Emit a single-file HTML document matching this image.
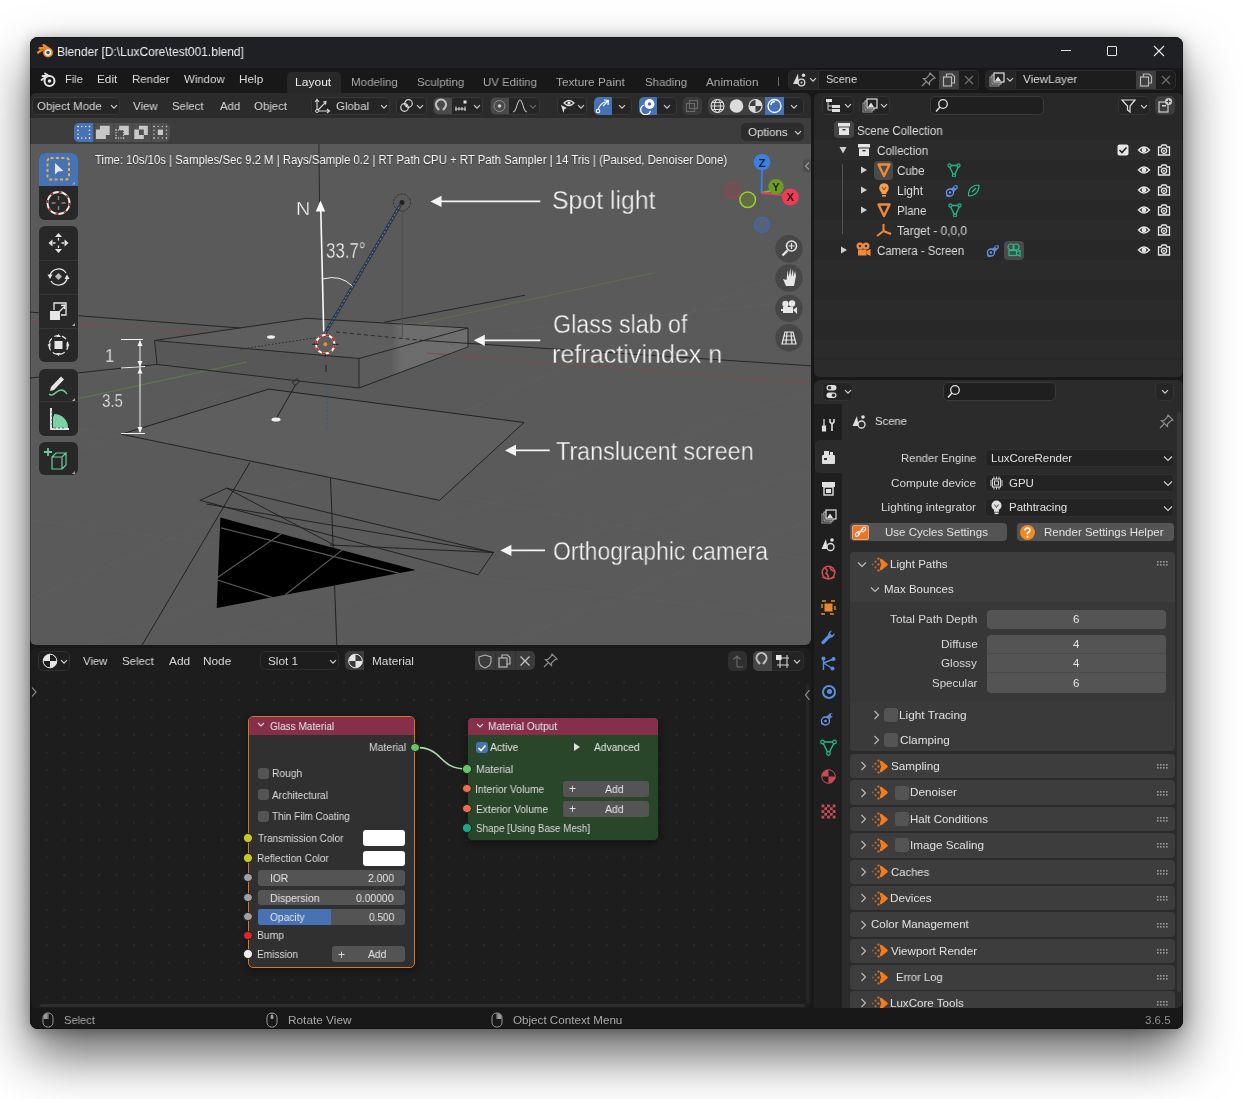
<!DOCTYPE html>
<html><head><meta charset="utf-8">
<style>
*{box-sizing:border-box;margin:0;padding:0}
html,body{width:1253px;height:1099px;overflow:hidden;background:#fff}
body{position:relative;font-family:"Liberation Sans",sans-serif;color:#d6d6d6;font-size:12px}
.a{position:absolute}
.t{position:absolute;white-space:nowrap;line-height:1;transform-origin:0 0;will-change:transform}
</style></head><body>
<div class="a" style="left:30px;top:37px;width:1153px;height:992px;background:#181818;border-radius:8px;box-shadow:0 26px 52px rgba(0,0,0,.62),0 2px 14px rgba(0,0,0,.28)"></div>
<div class="a" style="left:30px;top:37px;width:1153px;height:31px;background:#1f2023;border-radius:8px 8px 0 0"></div>
<svg class="a" style="left:36px;top:42px;" width="20" height="18" viewBox="0 0 20 18"><g transform="translate(1,1)"><path d="M1 9.5 L7 5.5 L2.5 5.2 L8 4.8 L6.5 2 L11 5 " fill="none" stroke="#f08a24" stroke-width="2.2" stroke-linecap="round" stroke-linejoin="round"/><circle cx="11" cy="9.5" r="5" fill="#f08a24"/><circle cx="11" cy="9.5" r="3.2" fill="#fff"/><circle cx="11" cy="9.5" r="1.8" fill="#265787"/></g></svg>
<div class="t" style="left:57.04px;top:45.79px;font-size:12.5px;color:#f2f2f2;transform:scaleX(0.9567);">Blender [D:\LuxCore\test001.blend]</div>
<div class="a" style="left:1061px;top:50px;width:10px;height:1px;background:#e0e0e0;"></div>
<div class="a" style="left:1107px;top:46px;width:10px;height:10px;background:transparent;border:1px solid #e0e0e0;border-radius:1px"></div>
<svg class="a" style="left:1153px;top:45px;" width="12" height="12" viewBox="0 0 12 12"><path d="M1 1 L11 11 M11 1 L1 11" stroke="#e8e8e8" stroke-width="1.1"/></svg>
<svg class="a" style="left:40px;top:72px;" width="16" height="15" viewBox="0 0 16 15"><path d="M1.5 8 L6 4.6 M2.5 4 L7.5 4 M5 1.5 L9 4" stroke="#e6e6e6" stroke-width="1.8" stroke-linecap="round" fill="none"/><circle cx="9.5" cy="9" r="5" fill="none" stroke="#e6e6e6" stroke-width="2"/><circle cx="9.5" cy="9" r="1.8" fill="#e6e6e6"/></svg>
<div class="t" style="left:65.11px;top:74.44px;font-size:11.8px;color:#dcdcdc;transform:scaleX(0.9385);">File</div>
<div class="t" style="left:97.07px;top:74.44px;font-size:11.8px;color:#dcdcdc;transform:scaleX(0.9818);">Edit</div>
<div class="t" style="left:131.58px;top:74.44px;font-size:11.8px;color:#dcdcdc;transform:scaleX(0.9697);">Render</div>
<div class="t" style="left:184.00px;top:74.44px;font-size:11.8px;color:#dcdcdc;transform:scaleX(0.9668);">Window</div>
<div class="t" style="left:239.05px;top:74.44px;font-size:11.8px;color:#dcdcdc;">Help</div>
<div class="a" style="left:287px;top:72px;width:54px;height:21px;background:#282828;border-radius:5px 5px 0 0"></div>
<div class="t" style="left:295.24px;top:76.64px;font-size:11.8px;color:#ececec;transform:scaleX(1.0222);">Layout</div>
<div class="t" style="left:350.88px;top:76.64px;font-size:11.8px;color:#a9a9a9;transform:scaleX(0.9797);">Modeling</div>
<div class="t" style="left:416.73px;top:76.64px;font-size:11.8px;color:#a9a9a9;transform:scaleX(0.9725);">Sculpting</div>
<div class="t" style="left:482.79px;top:76.64px;font-size:11.8px;color:#a9a9a9;transform:scaleX(0.9677);">UV Editing</div>
<div class="t" style="left:555.96px;top:76.64px;font-size:11.8px;color:#a9a9a9;">Texture Paint</div>
<div class="t" style="left:644.63px;top:76.64px;font-size:11.8px;color:#a9a9a9;transform:scaleX(0.9716);">Shading</div>
<div class="t" style="left:706.00px;top:76.64px;font-size:11.8px;color:#a9a9a9;">Animation</div>
<div class="a" style="left:778px;top:77px;width:1px;height:9px;background:#6a6a6a;"></div>
<div class="a" style="left:787.5px;top:70px;width:191px;height:19.5px;background:#1d1d1d;border:1px solid #2c2c2c;border-radius:5px"></div>
<div class="a" style="left:788.5px;top:71px;width:30px;height:17.5px;background:#262626;border-radius:4px 0 0 4px;border-right:1px solid #2e2e2e"></div>
<svg class="a" style="left:791px;top:71px;" width="18" height="17" viewBox="0 0 18 17"><path d="M7 2.5 L2 13 L8 13 Z" fill="#d8d8d8"/><circle cx="12.5" cy="4.2" r="1.8" fill="#d8d8d8"/><circle cx="10.5" cy="11.5" r="3.3" fill="#262626" stroke="#d8d8d8" stroke-width="1.3"/><circle cx="10.5" cy="11.5" r="1" fill="#d8d8d8"/></svg>
<svg class="a" style="left:807.5px;top:76px;" width="10" height="8" viewBox="0 0 10 8"><path d="M2 2.2 L5 5.2 L8 2.2" fill="none" stroke="#cfcfcf" stroke-width="1.2"/></svg>
<div class="t" style="left:826.45px;top:74.14px;font-size:11.8px;color:#dcdcdc;transform:scaleX(0.9279);">Scene</div>
<svg class="a" style="left:920px;top:71px;" width="17" height="17" viewBox="0 0 17 17"><path d="M10 2 L15 7 L12.5 8 L9.5 11 L9.5 13.5 L3.5 7.5 L6 7.5 L9 4.5 Z M6 11 L2 15" fill="none" stroke="#8a8a8a" stroke-width="1.2"/></svg>
<div class="a" style="left:939px;top:70.5px;width:20px;height:18.5px;background:#3f3f3f;"></div>
<svg class="a" style="left:941px;top:72px;" width="16" height="16" viewBox="0 0 16 16"><rect x="2.5" y="5" width="8" height="9" fill="none" stroke="#b8b8b8" stroke-width="1.2"/><path d="M5.5 5 L5.5 2 L11 2 L13.5 4.5 L13.5 11 L10.5 11" fill="none" stroke="#b8b8b8" stroke-width="1.2"/></svg>
<svg class="a" style="left:962px;top:73px;" width="14" height="14" viewBox="0 0 14 14"><path d="M3 3 L11 11 M11 3 L3 11" stroke="#6f6f6f" stroke-width="1.2"/></svg>
<div class="a" style="left:984.5px;top:70px;width:191px;height:19.5px;background:#1d1d1d;border:1px solid #2c2c2c;border-radius:5px"></div>
<div class="a" style="left:985.5px;top:71px;width:30px;height:17.5px;background:#262626;border-radius:4px 0 0 4px;border-right:1px solid #2e2e2e"></div>
<svg class="a" style="left:988px;top:71px;" width="18" height="17" viewBox="0 0 18 17"><rect x="2" y="6" width="9" height="9" fill="none" stroke="#9a9a9a" stroke-width="1"/><rect x="4" y="4" width="9" height="9" fill="#262626" stroke="#bdbdbd" stroke-width="1"/><rect x="6" y="2" width="10" height="9" fill="#262626" stroke="#e0e0e0" stroke-width="1.2"/><path d="M7 10 L10 5.5 L13 10 Z" fill="#e0e0e0"/></svg>
<svg class="a" style="left:1004.5px;top:76px;" width="10" height="8" viewBox="0 0 10 8"><path d="M2 2.2 L5 5.2 L8 2.2" fill="none" stroke="#cfcfcf" stroke-width="1.2"/></svg>
<div class="t" style="left:1022.88px;top:74.14px;font-size:11.8px;color:#dcdcdc;transform:scaleX(0.9884);">ViewLayer</div>
<div class="a" style="left:1135.5px;top:70.5px;width:20px;height:18.5px;background:#3f3f3f;"></div>
<svg class="a" style="left:1137.5px;top:72px;" width="16" height="16" viewBox="0 0 16 16"><rect x="2.5" y="5" width="8" height="9" fill="none" stroke="#b8b8b8" stroke-width="1.2"/><path d="M5.5 5 L5.5 2 L11 2 L13.5 4.5 L13.5 11 L10.5 11" fill="none" stroke="#b8b8b8" stroke-width="1.2"/></svg>
<svg class="a" style="left:1158.5px;top:73px;" width="14" height="14" viewBox="0 0 14 14"><path d="M3 3 L11 11 M11 3 L3 11" stroke="#6f6f6f" stroke-width="1.2"/></svg>
<div class="a" style="left:30px;top:93px;width:781px;height:25px;background:#2b2b2b;border-radius:6px 6px 0 0"></div>
<div class="a" style="left:31.8px;top:97px;width:88.5px;height:18px;background:#252525;border:1px solid #373737;border-radius:5px"></div>
<div class="t" style="left:37.23px;top:100.64px;font-size:11.8px;color:#d8d8d8;transform:scaleX(0.9692);">Object Mode</div>
<svg class="a" style="left:108.8px;top:102.5px;" width="10" height="8" viewBox="0 0 10 8"><path d="M2 2.2 L5 5.2 L8 2.2" fill="none" stroke="#cfcfcf" stroke-width="1.2"/></svg>
<div class="t" style="left:132.69px;top:100.64px;font-size:11.8px;color:#d8d8d8;transform:scaleX(0.9742);">View</div>
<div class="t" style="left:172.43px;top:100.64px;font-size:11.8px;color:#d8d8d8;transform:scaleX(0.9596);">Select</div>
<div class="t" style="left:219.50px;top:100.64px;font-size:11.8px;color:#d8d8d8;transform:scaleX(0.9664);">Add</div>
<div class="t" style="left:254.03px;top:100.64px;font-size:11.8px;color:#d8d8d8;transform:scaleX(0.9702);">Object</div>
<div class="a" style="left:310.8px;top:96.6px;width:79px;height:18.7px;background:#252525;border:1px solid #373737;border-radius:5px"></div>
<svg class="a" style="left:314px;top:97px;" width="18" height="17" viewBox="0 0 18 17"><path d="M3 14 L3 3 M1 5 L3 2.5 L5 5 M3 14 L15 14 M13 12 L15.5 14 L13 16 M3 14 L12 5 M9 5 L12 4.5 L11.5 7.5" fill="none" stroke="#d8d8d8" stroke-width="1.1"/><circle cx="3" cy="14" r="1.5" fill="#1d1d1d" stroke="#d8d8d8"/></svg>
<div class="t" style="left:336.43px;top:100.64px;font-size:11.8px;color:#d8d8d8;transform:scaleX(0.9724);">Global</div>
<svg class="a" style="left:378.6px;top:102.5px;" width="10" height="8" viewBox="0 0 10 8"><path d="M2 2.2 L5 5.2 L8 2.2" fill="none" stroke="#cfcfcf" stroke-width="1.2"/></svg>
<div class="a" style="left:395.9px;top:96.6px;width:30.7px;height:18.7px;background:#252525;border:1px solid #373737;border-radius:5px"></div>
<svg class="a" style="left:399px;top:98px;" width="16" height="16" viewBox="0 0 16 16"><circle cx="5.5" cy="9.5" r="3.8" fill="none" stroke="#d8d8d8" stroke-width="1.2"/><circle cx="9.5" cy="5.5" r="3.8" fill="none" stroke="#d8d8d8" stroke-width="1.2"/><circle cx="7.5" cy="7.5" r="1.2" fill="#d8d8d8"/></svg>
<svg class="a" style="left:414.5px;top:102.5px;" width="10" height="8" viewBox="0 0 10 8"><path d="M2 2.2 L5 5.2 L8 2.2" fill="none" stroke="#cfcfcf" stroke-width="1.2"/></svg>
<div class="a" style="left:432.8px;top:96.6px;width:50.2px;height:18.7px;background:#252525;border:1px solid #373737;border-radius:5px"></div>
<div class="a" style="left:433.8px;top:97.6px;width:18.2px;height:16.7px;background:#4a4a4a;border-radius:4px 0 0 4px"></div>
<svg class="a" style="left:434px;top:98px;" width="17" height="16" viewBox="0 0 17 16"><path d="M5 12 L3 9.5 A5 5 0 1 1 11 9.5 L9 12" fill="none" stroke="#bfbfbf" stroke-width="2.2" stroke-linejoin="round"/></svg>
<svg class="a" style="left:453px;top:98px;" width="20" height="16" viewBox="0 0 20 16"><path d="M2 11 L13 11 M3 8.5 L3 13 M6 9 L6 12.5 M9 9 L9 12.5 M12 8.5 L12 13" stroke="#cfcfcf" stroke-width="1.1"/><rect x="10.5" y="2.5" width="3" height="3" fill="#e0e0e0"/></svg>
<svg class="a" style="left:472px;top:102.5px;" width="10" height="8" viewBox="0 0 10 8"><path d="M2 2.2 L5 5.2 L8 2.2" fill="none" stroke="#cfcfcf" stroke-width="1.2"/></svg>
<div class="a" style="left:489.8px;top:96.6px;width:50.2px;height:18.7px;background:#252525;border:1px solid #373737;border-radius:5px"></div>
<div class="a" style="left:490.8px;top:97.6px;width:18.2px;height:16.7px;background:#4a4a4a;border-radius:4px 0 0 4px"></div>
<svg class="a" style="left:491px;top:98px;" width="17" height="16" viewBox="0 0 17 16"><circle cx="8.5" cy="8" r="5.5" fill="none" stroke="#8f8f8f" stroke-width="1"/><circle cx="8.5" cy="8" r="1.8" fill="#d0d0d0"/></svg>
<svg class="a" style="left:511px;top:98px;" width="18" height="16" viewBox="0 0 18 16"><path d="M2 14 C6 14 6 2 9 2 C12 2 12 14 16 14" fill="none" stroke="#bdbdbd" stroke-width="1.1"/></svg>
<svg class="a" style="left:528px;top:102.5px;" width="10" height="8" viewBox="0 0 10 8"><path d="M2 2.2 L5 5.2 L8 2.2" fill="none" stroke="#666" stroke-width="1.2"/></svg>
<div class="a" style="left:556.6px;top:96.6px;width:30.7px;height:18.7px;background:#252525;border:1px solid #373737;border-radius:5px"></div>
<svg class="a" style="left:559px;top:98px;" width="18" height="17" viewBox="0 0 18 17"><path d="M5 5 Q10 0 15 5 Q10 10 5 5 Z" fill="none" stroke="#e0e0e0" stroke-width="1.2"/><circle cx="10" cy="5" r="1.6" fill="#e0e0e0"/><path d="M2 7 L8 10 L5.5 11 L4.5 15 Z" fill="#e0e0e0"/></svg>
<svg class="a" style="left:576px;top:103px;" width="10" height="8" viewBox="0 0 10 8"><path d="M2 2.2 L5 5.2 L8 2.2" fill="none" stroke="#cfcfcf" stroke-width="1.2"/></svg>
<div class="a" style="left:593.6px;top:96.6px;width:38.4px;height:18.7px;background:#252525;border:1px solid #373737;border-radius:5px"></div>
<div class="a" style="left:593.6px;top:96.6px;width:18.6px;height:18.7px;background:#4772b3;border-radius:5px 0 0 5px"></div>
<svg class="a" style="left:594px;top:97px;" width="18" height="18" viewBox="0 0 18 18"><path d="M4 14 Q5 6 13 4.5" fill="none" stroke="#fff" stroke-width="1.2"/><path d="M10 3 L14.5 3.5 L14 8 M14.5 3.5 L9 9" fill="none" stroke="#fff" stroke-width="1.1"/><circle cx="4" cy="14" r="1.8" fill="#4772b3" stroke="#fff" stroke-width="1.1"/></svg>
<svg class="a" style="left:617px;top:102.5px;" width="10" height="8" viewBox="0 0 10 8"><path d="M2 2.2 L5 5.2 L8 2.2" fill="none" stroke="#cfcfcf" stroke-width="1.2"/></svg>
<div class="a" style="left:638.8px;top:96.6px;width:38.4px;height:18.7px;background:#252525;border:1px solid #373737;border-radius:5px"></div>
<div class="a" style="left:638.8px;top:96.6px;width:18.6px;height:18.7px;background:#4772b3;border-radius:5px 0 0 5px"></div>
<svg class="a" style="left:639px;top:97px;" width="18" height="18" viewBox="0 0 18 18"><circle cx="10.5" cy="7" r="5" fill="#fff"/><path d="M5 8 A5 5 0 1 0 11.5 14" fill="none" stroke="#fff" stroke-width="1.3"/><circle cx="10.5" cy="7" r="1.8" fill="#4772b3"/></svg>
<svg class="a" style="left:662px;top:102.5px;" width="10" height="8" viewBox="0 0 10 8"><path d="M2 2.2 L5 5.2 L8 2.2" fill="none" stroke="#cfcfcf" stroke-width="1.2"/></svg>
<div class="a" style="left:683px;top:96.6px;width:18.5px;height:18.7px;background:#3a3a3a;border-radius:5px"></div>
<svg class="a" style="left:684px;top:98px;" width="17" height="16" viewBox="0 0 17 16"><rect x="2.5" y="5.5" width="8" height="8" fill="none" stroke="#6a6a6a" stroke-width="1"/><rect x="5.5" y="2.5" width="8" height="8" fill="none" stroke="#6a6a6a" stroke-width="1"/></svg>
<div class="a" style="left:708px;top:96.6px;width:96px;height:18.7px;background:#252525;border:1px solid #373737;border-radius:5px"></div>
<div class="a" style="left:708px;top:96.6px;width:76px;height:18.7px;background:#3f3f3f;border-radius:5px 0 0 5px"></div>
<div class="a" style="left:765px;top:96.6px;width:19px;height:18.7px;background:#4772b3;"></div>
<svg class="a" style="left:708px;top:97px;" width="76" height="18" viewBox="0 0 76 18"><g fill="none" stroke="#dcdcdc" stroke-width="1.1"><circle cx="9.5" cy="9" r="6.5"/><ellipse cx="9.5" cy="9" rx="3" ry="6.5"/><path d="M3 9 L16 9 M4 5.5 L15 5.5 M4 12.5 L15 12.5"/></g><circle cx="28.5" cy="9" r="6.8" fill="#dcdcdc"/><circle cx="47.5" cy="9" r="6.5" fill="none" stroke="#dcdcdc" stroke-width="1.2"/><path d="M47.5 2.5 A6.5 6.5 0 0 1 54 9 L47.5 9 Z M47.5 9 L47.5 15.5 A6.5 6.5 0 0 1 41 9 Z" fill="#dcdcdc"/><circle cx="66.5" cy="9" r="6.5" fill="none" stroke="#fff" stroke-width="1.3"/><path d="M63 8 A4 4 0 0 1 67 4.5" fill="none" stroke="#fff" stroke-width="1.5"/></svg>
<svg class="a" style="left:789px;top:102.5px;" width="10" height="8" viewBox="0 0 10 8"><path d="M2 2.2 L5 5.2 L8 2.2" fill="none" stroke="#cfcfcf" stroke-width="1.2"/></svg>
<div class="a" style="left:30px;top:117.7px;width:781px;height:26.3px;background:#3d3d3d;"></div>
<div class="a" style="left:74.4px;top:123px;width:95.4px;height:18.7px;background:#4f4f4f;border-radius:5px"></div>
<div class="a" style="left:74.4px;top:123px;width:19.1px;height:18.7px;background:#4772b3;border-radius:5px 0 0 5px"></div>
<div class="a" style="left:93.5px;top:123px;width:1px;height:18.7px;background:#454545;"></div>
<div class="a" style="left:112.5px;top:123px;width:1px;height:18.7px;background:#454545;"></div>
<div class="a" style="left:131.5px;top:123px;width:1px;height:18.7px;background:#454545;"></div>
<div class="a" style="left:150.6px;top:123px;width:1px;height:18.7px;background:#454545;"></div>
<svg class="a" style="left:74px;top:123px" width="96" height="19" viewBox="74 123 96 19"><rect x="77.40" y="125.90" width="1.2" height="1.2" fill="#ffffff"/><rect x="77.40" y="137.40" width="1.2" height="1.2" fill="#ffffff"/><rect x="77.40" y="125.90" width="1.2" height="1.2" fill="#ffffff"/><rect x="88.90" y="125.90" width="1.2" height="1.2" fill="#ffffff"/><rect x="81.23" y="125.90" width="1.2" height="1.2" fill="#ffffff"/><rect x="81.23" y="137.40" width="1.2" height="1.2" fill="#ffffff"/><rect x="77.40" y="129.73" width="1.2" height="1.2" fill="#ffffff"/><rect x="88.90" y="129.73" width="1.2" height="1.2" fill="#ffffff"/><rect x="85.07" y="125.90" width="1.2" height="1.2" fill="#ffffff"/><rect x="85.07" y="137.40" width="1.2" height="1.2" fill="#ffffff"/><rect x="77.40" y="133.57" width="1.2" height="1.2" fill="#ffffff"/><rect x="88.90" y="133.57" width="1.2" height="1.2" fill="#ffffff"/><rect x="88.90" y="125.90" width="1.2" height="1.2" fill="#ffffff"/><rect x="88.90" y="137.40" width="1.2" height="1.2" fill="#ffffff"/><rect x="77.40" y="137.40" width="1.2" height="1.2" fill="#ffffff"/><rect x="88.90" y="137.40" width="1.2" height="1.2" fill="#ffffff"/><path d="M99.9 125.7 L109.7 125.7 L109.7 135 L105.9 135 L105.9 139 L95.9 139 L95.9 129.4 L99.9 129.4 Z" fill="#c8c8c8"/><path d="M119.1 125.7 L128.8 125.7 L128.8 135 L123.9 135 L123.9 130 L119.1 130 Z" fill="#c8c8c8"/><rect x="115.40" y="129.40" width="1.2" height="1.2" fill="#c8c8c8"/><rect x="115.40" y="137.40" width="1.2" height="1.2" fill="#c8c8c8"/><rect x="115.40" y="129.40" width="1.2" height="1.2" fill="#c8c8c8"/><rect x="122.90" y="129.40" width="1.2" height="1.2" fill="#c8c8c8"/><rect x="117.90" y="129.40" width="1.2" height="1.2" fill="#c8c8c8"/><rect x="117.90" y="137.40" width="1.2" height="1.2" fill="#c8c8c8"/><rect x="115.40" y="132.07" width="1.2" height="1.2" fill="#c8c8c8"/><rect x="122.90" y="132.07" width="1.2" height="1.2" fill="#c8c8c8"/><rect x="120.40" y="129.40" width="1.2" height="1.2" fill="#c8c8c8"/><rect x="120.40" y="137.40" width="1.2" height="1.2" fill="#c8c8c8"/><rect x="115.40" y="134.73" width="1.2" height="1.2" fill="#c8c8c8"/><rect x="122.90" y="134.73" width="1.2" height="1.2" fill="#c8c8c8"/><rect x="122.90" y="129.40" width="1.2" height="1.2" fill="#c8c8c8"/><rect x="122.90" y="137.40" width="1.2" height="1.2" fill="#c8c8c8"/><rect x="115.40" y="137.40" width="1.2" height="1.2" fill="#c8c8c8"/><rect x="122.90" y="137.40" width="1.2" height="1.2" fill="#c8c8c8"/><path d="M138.9 125.7 L147.8 125.7 L147.8 135 L143.8 135 L143.8 139 L134.3 139 L134.3 129.4 L138.9 129.4 Z M138.9 129.4 L138.9 135 L143.8 135 L143.8 129.4 Z" fill="#c8c8c8" fill-rule="evenodd"/><rect x="153.40" y="125.90" width="1.2" height="1.2" fill="#c8c8c8"/><rect x="153.40" y="137.40" width="1.2" height="1.2" fill="#c8c8c8"/><rect x="153.40" y="125.90" width="1.2" height="1.2" fill="#c8c8c8"/><rect x="165.90" y="125.90" width="1.2" height="1.2" fill="#c8c8c8"/><rect x="157.57" y="125.90" width="1.2" height="1.2" fill="#c8c8c8"/><rect x="157.57" y="137.40" width="1.2" height="1.2" fill="#c8c8c8"/><rect x="153.40" y="129.73" width="1.2" height="1.2" fill="#c8c8c8"/><rect x="165.90" y="129.73" width="1.2" height="1.2" fill="#c8c8c8"/><rect x="161.73" y="125.90" width="1.2" height="1.2" fill="#c8c8c8"/><rect x="161.73" y="137.40" width="1.2" height="1.2" fill="#c8c8c8"/><rect x="153.40" y="133.57" width="1.2" height="1.2" fill="#c8c8c8"/><rect x="165.90" y="133.57" width="1.2" height="1.2" fill="#c8c8c8"/><rect x="165.90" y="125.90" width="1.2" height="1.2" fill="#c8c8c8"/><rect x="165.90" y="137.40" width="1.2" height="1.2" fill="#c8c8c8"/><rect x="153.40" y="137.40" width="1.2" height="1.2" fill="#c8c8c8"/><rect x="165.90" y="137.40" width="1.2" height="1.2" fill="#c8c8c8"/><rect x="157.8" y="129.6" width="5.2" height="5.4" fill="#c8c8c8"/></svg>
<div class="a" style="left:741.2px;top:123.1px;width:62.6px;height:18px;background:#2c2c2c;border-radius:5px"></div>
<div class="t" style="left:748.13px;top:126.64px;font-size:11.8px;color:#e0e0e0;transform:scaleX(0.9736);">Options</div>
<svg class="a" style="left:793px;top:128.5px;" width="10" height="8" viewBox="0 0 10 8"><path d="M2 2.2 L5 5.2 L8 2.2" fill="none" stroke="#cfcfcf" stroke-width="1.2"/></svg>
<div class="a" style="left:30px;top:144px;width:781px;height:501px;background:#5a5a5a;border-radius:0 0 6px 6px;overflow:hidden"></div>
<svg class="a" style="left:30px;top:144px" width="781" height="501" viewBox="30 144 781 501"><path d="M30 470 L330 350" fill="none" stroke="#5e5e5e" stroke-width="1" /><path d="M30 600 L811 260" fill="none" stroke="#5e5e5e" stroke-width="1" /><path d="M90 645 L811 390" fill="none" stroke="#5e5e5e" stroke-width="1" /><path d="M30 420 L811 560" fill="none" stroke="#5e5e5e" stroke-width="1" /><path d="M200 645 L811 470" fill="none" stroke="#5e5e5e" stroke-width="1" /><path d="M500 645 L811 520" fill="none" stroke="#5e5e5e" stroke-width="1" /><path d="M30 520 L811 620" fill="none" stroke="#5e5e5e" stroke-width="1" /><path d="M30 380 L811 300" fill="none" stroke="#5e5e5e" stroke-width="1" /><path d="M121.3 434.2 L268.9 389.1 L524 422.5 L439.6 500.3 Z" fill="#5e5e5e"/><path d="M154.5 340.5 L306 318.3 L468 328 L359 358.5 Z" fill="#5e5e5e"/><path d="M154.5 340.5 L359 358.5 L359 388 L157 364.4 Z" fill="#575757"/><path d="M359 358.5 L468 328 L468 347 L359 388 Z" fill="#5c5c5c"/><defs><linearGradient id="hl" x1="0" x2="1"><stop offset="0" stop-color="#5e5e5e"/><stop offset=".12" stop-color="#6c6c6c"/><stop offset="1" stop-color="#6e6e6e"/></linearGradient></defs><path d="M392 322 L467.7 327.6 L467.7 348.3 L392 375 Z" fill="url(#hl)"/><path d="M30 320.4 L208.8 333" fill="none" stroke="#7a4f4f" stroke-width="1" /><path d="M426.8 353 L811 383.3" fill="none" stroke="#7a4f4f" stroke-width="1" /><path d="M78 398.7 L247 362" fill="none" stroke="#5f7a4a" stroke-width="1" /><path d="M415 324.6 L655 272.5" fill="none" stroke="#5f6f52" stroke-width="1" /><path d="M30 312.1 L240.5 328" fill="none" stroke="#262626" stroke-width="1" /><path d="M384 322.3 L525.2 295.2" fill="none" stroke="#262626" stroke-width="1" /><path d="M30 378 L157 364.4" fill="none" stroke="#262626" stroke-width="1" /><path d="M420.7 340.3 L811 365.8" fill="none" stroke="#262626" stroke-width="1" /><path d="M154.5 340.5 L306 318.3 L468 328 L359 358.5 L154.5 340.5" fill="none" stroke="#262626" stroke-width="1" /><path d="M154.5 340.5 L157 364.4 L359 388 L468 347 L468 328" fill="none" stroke="#262626" stroke-width="1" /><path d="M359 358.5 L359 388" fill="none" stroke="#262626" stroke-width="1" /><path d="M240.7 349 L325 336.4" fill="none" stroke="#2a2a2a" stroke-width="1" stroke-dasharray="1.5 2"/><path d="M336 332 L421 340.3" fill="none" stroke="#2a2a2a" stroke-width="1" stroke-dasharray="4 3"/><path d="M121.3 434.2 L268.9 389.1 L524 422.5 L439.6 500.3 L121.3 434.2" fill="none" stroke="#222" stroke-width="1" /><path d="M249.8 462.5 L142.2 645" fill="none" stroke="#222" stroke-width="1" /><path d="M330.5 478.3 L336.8 645" fill="none" stroke="#222" stroke-width="1" /><path d="M199.9 500.3 L226.7 488.2 L493.5 552.5 L478.1 574.8 L199.9 500.3" fill="none" stroke="#222" stroke-width="1" /><path d="M226.7 488.2 L335 545.5" fill="none" stroke="#222" stroke-width="1" /><path d="M206.5 504 L493.5 552.5" fill="none" stroke="#222" stroke-width="1" /><path d="M330 545 L493.5 552.5" fill="none" stroke="#222" stroke-width="1" /><path d="M220.4 517.6 L216.7 607.9 L415.7 570 Z" fill="#000"/><path d="M221 527.8 L408 575.6" fill="none" stroke="#5a5a5a" stroke-width="1.2" /><path d="M217.5 580 L272.5 597.6" fill="none" stroke="#5a5a5a" stroke-width="1.2" /><path d="M217.5 577.4 L281.7 533.4" fill="none" stroke="#5a5a5a" stroke-width="1.2" /><path d="M285.4 594.7 L342.3 549.9" fill="none" stroke="#5a5a5a" stroke-width="1.2" /><path d="M318.9 144 L319.5 202" fill="none" stroke="#2a2a2a" stroke-width="1" /><path d="M402.3 211 L402.3 337.5" fill="none" stroke="#4e4e4e" stroke-width="1" /><path d="M296 384 L276 419" fill="none" stroke="#1e1e1e" stroke-width="1" /><ellipse cx="276" cy="419.5" rx="4.5" ry="2" fill="#f0f0f0"/><ellipse cx="271" cy="337" rx="4" ry="1.8" fill="#f0f0f0"/><rect x="293" y="380" width="6" height="4" fill="none" stroke="#333" transform="rotate(-40 296 382)"/><path d="M327 386 L327.5 428" fill="none" stroke="#3a5a8a" stroke-width="1" stroke-dasharray="2 2"/><path d="M326 365 L326 372" fill="none" stroke="#222" stroke-width="1" /><path d="M325.3 333 L402 202.3" fill="none" stroke="#2d3746" stroke-width="3.2" /><path d="M325.3 333 L402 202.3" fill="none" stroke="#6a8fc8" stroke-width="1" stroke-dasharray="2 2"/><circle cx="402" cy="202.5" r="8.5" fill="none" stroke="#2a2a2a" stroke-width="1" stroke-dasharray="2 1.5"/><circle cx="402" cy="202.5" r="2.5" fill="#222"/><path d="M323.7 331.5 L320.8 210" fill="none" stroke="#fafafa" stroke-width="1.6" /><path d="M320.5 200.5 L315.8 211.5 L325.2 211.5 Z" fill="#fafafa"/><path d="M323 279 Q340 274 352.4 286" fill="none" stroke="#f0f0f0" stroke-width="1"/><circle cx="325.3" cy="344.3" r="9.3" fill="none" stroke="#fff" stroke-width="2"/><circle cx="325.3" cy="344.3" r="9.3" fill="none" stroke="#d02020" stroke-width="2" stroke-dasharray="3.65 3.65"/><path d="M312 344.3 L318 344.3 M332.5 344.3 L338.5 344.3 M325.3 353.5 L325.3 357" stroke="#222" stroke-width="1"/><circle cx="325.3" cy="344.3" r="2" fill="#f08a24"/><path d="M121 339.5 L143 339.5" fill="none" stroke="#f4f4f4" stroke-width="1" /><path d="M121 368 L145 366.5" fill="none" stroke="#f4f4f4" stroke-width="1" /><path d="M121 433.5 L145 433.5" fill="none" stroke="#f4f4f4" stroke-width="1" /><path d="M140 341 L140 432" fill="none" stroke="#f4f4f4" stroke-width="1" /><path d="M140 340 L137.5 346 L142.5 346 Z M140 367 L137.5 361 L142.5 361 Z M140 367.5 L137.5 373.5 L142.5 373.5 Z M140 433 L137.5 427 L142.5 427 Z" fill="#f4f4f4"/><path d="M436.5 201.4 L540.3 201.4" stroke="#f4f4f4" stroke-width="1.7"/><path d="M430.5 201.4 L441.5 195.8 L441.5 207.0 Z" fill="#f4f4f4"/><path d="M479.8 340.3 L540.3 340.3" stroke="#f4f4f4" stroke-width="1.7"/><path d="M473.8 340.3 L484.8 334.7 L484.8 345.90000000000003 Z" fill="#f4f4f4"/><path d="M511 450.4 L549.7 450.4" stroke="#f4f4f4" stroke-width="1.7"/><path d="M505 450.4 L516 444.79999999999995 L516 456.0 Z" fill="#f4f4f4"/><path d="M506.4 550.4 L545 550.4" stroke="#f4f4f4" stroke-width="1.7"/><path d="M500.4 550.4 L511.4 544.8 L511.4 556.0 Z" fill="#f4f4f4"/></svg>
<div class="t" style="left:552.46px;top:186.97px;font-size:26px;color:#f6f6f6;transform:scaleX(0.9545);-webkit-text-stroke:0.35px #5a5a5a;">Spot light</div>
<div class="t" style="left:552.54px;top:311.47px;font-size:26px;color:#f6f6f6;transform:scaleX(0.8948);-webkit-text-stroke:0.35px #5a5a5a;">Glass slab of</div>
<div class="t" style="left:551.94px;top:341.17px;font-size:26px;color:#f6f6f6;transform:scaleX(0.9662);-webkit-text-stroke:0.35px #5a5a5a;">refractivindex n</div>
<div class="t" style="left:555.53px;top:437.67px;font-size:26px;color:#f6f6f6;transform:scaleX(0.8977);-webkit-text-stroke:0.35px #5a5a5a;">Translucent screen</div>
<div class="t" style="left:552.56px;top:537.77px;font-size:26px;color:#f6f6f6;transform:scaleX(0.8807);-webkit-text-stroke:0.35px #5a5a5a;">Orthographic camera</div>
<div class="t" style="left:296.01px;top:199.31px;font-size:19px;color:#f6f6f6;transform:scaleX(1.0432);-webkit-text-stroke:0.35px #5a5a5a;">N</div>
<div class="t" style="left:326.32px;top:240.29px;font-size:22px;color:#f6f6f6;transform:scaleX(0.7677);-webkit-text-stroke:0.35px #5a5a5a;">33.7°</div>
<div class="t" style="left:105.08px;top:346.71px;font-size:18px;color:#f6f6f6;transform:scaleX(0.9173);-webkit-text-stroke:0.35px #5a5a5a;">1</div>
<div class="t" style="left:102.40px;top:392.21px;font-size:18px;color:#f6f6f6;transform:scaleX(0.8355);-webkit-text-stroke:0.35px #5a5a5a;">3.5</div>
<div class="t" style="left:95.47px;top:154.24px;font-size:12.8px;color:#ffffff;transform:scaleX(0.8871);text-shadow:0 0 1.5px rgba(0,0,0,.55),0 1px 1px rgba(0,0,0,.35);">Time: 10s/10s | Samples/Sec 9.2 M | Rays/Sample 0.2 | RT Path CPU + RT Path Sampler | 14 Tris | (Paused, Denoiser Done)</div>
<div class="a" style="left:39px;top:152.5px;width:39px;height:67.5px;background:#282828;border-radius:6px"></div>
<div class="a" style="left:39px;top:226px;width:39px;height:136px;background:#282828;border-radius:6px"></div>
<div class="a" style="left:39px;top:369px;width:39px;height:67px;background:#282828;border-radius:6px"></div>
<div class="a" style="left:39px;top:442px;width:39px;height:33px;background:#282828;border-radius:6px"></div>
<div class="a" style="left:39px;top:152.5px;width:39px;height:33.5px;background:#4772b3;border-radius:6px 6px 0 0"></div>
<div class="a" style="left:39px;top:259.5px;width:39px;height:1px;background:#363636;"></div>
<div class="a" style="left:39px;top:293.5px;width:39px;height:1px;background:#363636;"></div>
<div class="a" style="left:39px;top:327.5px;width:39px;height:1px;background:#363636;"></div>
<div class="a" style="left:39px;top:401px;width:39px;height:1px;background:#363636;"></div>
<svg class="a" style="left:0;top:0" width="100" height="500" viewBox="0 0 100 500"><g transform="translate(39 152.5)"><rect x="8.5" y="5.5" width="21.5" height="21.5" rx="3" fill="none" stroke="#e8b04a" stroke-width="2" stroke-dasharray="3 2.4"/><path d="M16 10.5 L16 22 L19 19 L24.5 18.5 Z" fill="#e6e6e6"/><path d="M36 29 L33 32 L36 32 Z" fill="#9ab"/></g><g transform="translate(39 186)"><circle cx="19.5" cy="17" r="11" fill="none" stroke="#eee" stroke-width="1.8"/><circle cx="19.5" cy="17" r="11" fill="none" stroke="#a02828" stroke-width="1.8" stroke-dasharray="3 5.6"/><path d="M19.5 10 L19.5 14 M19.5 20 L19.5 24 M12.5 17 L16.5 17 M22.5 17 L26.5 17" stroke="#888" stroke-width="1.4"/></g><g transform="translate(39 226)" fill="#e6e6e6"><path d="M19.5 7 L16 11 L23 11 Z M19.5 27 L16 23 L23 23 Z M9.5 17 L13.5 13.5 L13.5 20.5 Z M29.5 17 L25.5 13.5 L25.5 20.5 Z"/><path d="M19.5 12 L19.5 14.5 M19.5 19.5 L19.5 22 M14 17 L16.5 17 M22.5 17 L25 17" stroke="#e6e6e6" stroke-width="1.3"/></g><g transform="translate(39 260)"><path d="M11 15 A9 9 0 0 1 27 13 M28 19 A9 9 0 0 1 12 21" fill="none" stroke="#e6e6e6" stroke-width="1.3"/><path d="M8.5 14.5 L13.5 14.5 L11 19 Z M25.5 19 L30.5 19 L28 14.5 Z" fill="#e6e6e6"/><path d="M19.5 13 L23 16.5 L19.5 20 L16 16.5 Z" fill="#bbb"/></g><g transform="translate(39 294)"><rect x="11" y="17" width="10" height="9" fill="#e6e6e6"/><path d="M15 16 L15 9 L27 9 L27 21 L22 21" fill="none" stroke="#e6e6e6" stroke-width="1.3"/><path d="M20 18 L25.5 12.5 M22 11.5 L26 11 L25.5 15" fill="none" stroke="#e6e6e6" stroke-width="1.3"/><path d="M36 29 L33 32 L36 32 Z" fill="#aaa"/></g><g transform="translate(39 328)"><circle cx="19.5" cy="17" r="9.5" fill="none" stroke="#e6e6e6" stroke-width="1.2" stroke-dasharray="5 3"/><rect x="15.5" y="13" width="8" height="8" fill="#e6e6e6"/><path d="M19.5 6 L17 9 L22 9 Z M19.5 28 L17 25 L22 25 Z M8.5 17 L11.5 14.5 L11.5 19.5 Z M30.5 17 L27.5 14.5 L27.5 19.5 Z" fill="#e6e6e6"/></g><g transform="translate(39 369)"><path d="M12 18 L22 7.5 L25 10.5 L15 21 L11 22 Z" fill="#e6e6e6"/><path d="M10 25 C14 29 17 21 22 21 C26 21 27 24 28 25" fill="none" stroke="#6ccb9a" stroke-width="1.4"/><path d="M36 29 L33 32 L36 32 Z" fill="#aaa"/></g><g transform="translate(39 401)"><path d="M12 7 L12 28 L30 28" fill="none" stroke="#e6e6e6" stroke-width="2"/><path d="M14 28 A14 14 0 0 0 14 14 Z" fill="#7ad3a7" transform="rotate(180 14 21) translate(-14 0) scale(-1 1) translate(-42 0)"/><path d="M15 27 L15 13 A14 14 0 0 1 29 27 Z" fill="#7ad3a7"/><path d="M12 11 L14 11 M12 15 L14 15 M12 19 L14 19 M12 23 L14 23 M16 28 L16 26 M20 28 L20 26 M24 28 L24 26" stroke="#555" stroke-width="0.8"/></g><g transform="translate(39 442)"><path d="M9 6 L9 14 M5 10 L13 10" stroke="#6ccb9a" stroke-width="1.8"/><path d="M13 15 L23 15 L23 27 L13 27 Z M13 15 L17 11 L27 11 L23 15 M27 11 L27 23 L23 27" fill="none" stroke="#6ccb9a" stroke-width="1.2"/><path d="M36 29 L33 32 L36 32 Z" fill="#aaa"/></g></svg>
<svg class="a" style="left:700px;top:140px" width="111" height="220" viewBox="700 140 111 220"><circle cx="733" cy="190.4" r="7.5" fill="#6b5256" stroke="#a0404c" stroke-width="1.3"/><circle cx="762" cy="224.8" r="7.5" fill="#56617a" stroke="#3b6cb0" stroke-width="1.3"/><path d="M761.6 193 L762 170" stroke="#3a7fe0" stroke-width="2"/><path d="M761.6 193 L782 188" stroke="#8ab030" stroke-width="2"/><path d="M761.6 193 L783 195" stroke="#e0405a" stroke-width="2"/><circle cx="747.7" cy="199.8" r="7.8" fill="#5f6e45" stroke="#9ad030" stroke-width="1.5"/><circle cx="762" cy="162.2" r="8.3" fill="#3a82e0"/><circle cx="776" cy="186.7" r="7.7" fill="#6d9b2a"/><circle cx="790.3" cy="196.9" r="8.5" fill="#ee3d58"/><text x="762" y="166.6" font-family="Liberation Sans" font-weight="bold" font-size="11.5" fill="#10203a" text-anchor="middle">Z</text><text x="776" y="191" font-family="Liberation Sans" font-weight="bold" font-size="11" fill="#1d2a0a" text-anchor="middle">Y</text><text x="790.3" y="201.2" font-family="Liberation Sans" font-weight="bold" font-size="11.5" fill="#3a0a10" text-anchor="middle">X</text><circle cx="789" cy="248.7" r="13.7" fill="#474747"/><circle cx="789" cy="278" r="13.7" fill="#474747"/><circle cx="789" cy="308.4" r="13.7" fill="#474747"/><circle cx="789" cy="337.8" r="13.7" fill="#474747"/><g fill="none" stroke="#e6e6e6" stroke-width="1.6"><circle cx="791.5" cy="246" r="5"/><path d="M787.5 250.5 L782.5 255.5" stroke-width="2.4"/><path d="M791.5 243 L791.5 249 M788.5 246 L794.5 246" stroke-width="1.2"/></g><path d="M783 279 L786 286 L794 286 L796 276 L795 271 L793.5 277 L793 269 L791 277 L790.5 268 L788.5 277 L787.5 270 L786.5 280 Z" fill="#e6e6e6"/><g fill="#e6e6e6"><circle cx="785.5" cy="304" r="3.2"/><circle cx="792" cy="303.5" r="3.2"/><rect x="783" y="307" width="10" height="6"/><path d="M793 310 L797 307 L797 314 Z"/><rect x="781" y="309" width="2" height="2"/></g><path d="M782 344 L785 332 L793 332 L796 344 Z M782.8 340 L795.2 340 M783.7 336 L794.3 336 M787 332 L786 344 M791 332 L792 344" fill="none" stroke="#e6e6e6" stroke-width="1.2"/><rect x="803" y="159.5" width="10" height="13" rx="3" fill="#4e4e4e"/><path d="M809 162.5 L805.5 166 L809 169.5" fill="none" stroke="#9a9a9a" stroke-width="1.1"/></svg>
<div class="a" style="left:30px;top:648px;width:781px;height:360px;background:#1d1d1d;border-radius:6px;overflow:hidden"></div>
<div class="a" style="left:30px;top:674px;width:775px;height:328px;background-image:radial-gradient(circle,#2a2a2a 1.2px,transparent 1.5px);background-size:17.5px 17.5px;background-position:7.85px -0.25px"></div>
<div class="a" style="left:38.4px;top:651.3px;width:31.8px;height:19.4px;background:#1f1f1f;border:1px solid #303030;border-radius:5px"></div>
<svg class="a" style="left:41px;top:652px;" width="18" height="18" viewBox="0 0 18 18"><circle cx="9" cy="9" r="6.8" fill="#e6e6e6"/><path d="M9 2.2 A6.8 6.8 0 0 1 15.8 9 L9 9 Z M9 9 L9 15.8 A6.8 6.8 0 0 1 2.2 9 Z" fill="#1f1f1f"/><circle cx="9" cy="9" r="6.8" fill="none" stroke="#e6e6e6" stroke-width="1"/></svg>
<svg class="a" style="left:58.5px;top:657.5px;" width="10" height="8" viewBox="0 0 10 8"><path d="M2 2.2 L5 5.2 L8 2.2" fill="none" stroke="#cfcfcf" stroke-width="1.2"/></svg>
<div class="t" style="left:82.59px;top:655.64px;font-size:11.8px;color:#d8d8d8;transform:scaleX(0.9623);">View</div>
<div class="t" style="left:122.03px;top:655.64px;font-size:11.8px;color:#d8d8d8;transform:scaleX(0.9721);">Select</div>
<div class="t" style="left:168.90px;top:655.64px;font-size:11.8px;color:#d8d8d8;transform:scaleX(1.0060);">Add</div>
<div class="t" style="left:203.35px;top:655.64px;font-size:11.8px;color:#d8d8d8;">Node</div>
<div class="a" style="left:260.2px;top:651.1px;width:79.2px;height:19.2px;background:#1d1d1d;border:1px solid #2e2e2e;border-radius:5px"></div>
<div class="t" style="left:267.81px;top:655.64px;font-size:11.8px;color:#d8d8d8;">Slot 1</div>
<svg class="a" style="left:328px;top:657.5px;" width="10" height="8" viewBox="0 0 10 8"><path d="M2 2.2 L5 5.2 L8 2.2" fill="none" stroke="#cfcfcf" stroke-width="1.2"/></svg>
<div class="a" style="left:345.3px;top:651.1px;width:189.4px;height:19.2px;background:#3b3b3b;border-radius:5px"></div>
<div class="a" style="left:364.4px;top:651.1px;width:110.3px;height:19.2px;background:#1d1d1d;"></div>
<svg class="a" style="left:346px;top:652px;" width="18" height="18" viewBox="0 0 18 18"><circle cx="9.5" cy="9" r="6.8" fill="#e6e6e6"/><path d="M9.5 2.2 A6.8 6.8 0 0 1 16.3 9 L9.5 9 Z M9.5 9 L9.5 15.8 A6.8 6.8 0 0 1 2.7 9 Z" fill="#3b3b3b"/><circle cx="9.5" cy="9" r="6.8" fill="none" stroke="#e6e6e6" stroke-width="1"/></svg>
<div class="t" style="left:371.65px;top:655.64px;font-size:11.8px;color:#d8d8d8;">Material</div>
<svg class="a" style="left:476px;top:652px;" width="18" height="18" viewBox="0 0 18 18"><path d="M9 3 L15 5 L15 9 C15 13 12 15 9 16 C6 15 3 13 3 9 L3 5 Z" fill="none" stroke="#b0b0b0" stroke-width="1.1"/></svg>
<div class="a" style="left:494.6px;top:651.1px;width:1px;height:19.2px;background:#333;"></div>
<div class="a" style="left:515px;top:651.1px;width:1px;height:19.2px;background:#333;"></div>
<svg class="a" style="left:496px;top:652px;" width="18" height="18" viewBox="0 0 18 18"><rect x="3" y="6" width="8" height="9" fill="none" stroke="#b8b8b8" stroke-width="1.2"/><path d="M6 6 L6 3 L11.5 3 L14 5.5 L14 12 L11 12" fill="none" stroke="#b8b8b8" stroke-width="1.2"/></svg>
<svg class="a" style="left:517px;top:653px;" width="16" height="16" viewBox="0 0 16 16"><path d="M3.5 3.5 L12.5 12.5 M12.5 3.5 L3.5 12.5" stroke="#c8c8c8" stroke-width="1.2"/></svg>
<svg class="a" style="left:541px;top:652px;" width="18" height="18" viewBox="0 0 18 18"><path d="M11 2 L16 7 L13.5 8 L10.5 11 L10.5 13.5 L4.5 7.5 L7 7.5 L10 4.5 Z M7 11 L3 15" fill="none" stroke="#8a8a8a" stroke-width="1.2"/></svg>
<div class="a" style="left:728px;top:651.3px;width:18.8px;height:19.3px;background:#2f2f2f;border-radius:5px"></div>
<svg class="a" style="left:728px;top:652px;" width="19" height="18" viewBox="0 0 19 18"><path d="M9 15 L9 4 M5.5 7.5 L9 4 L12.5 7.5 M9 15 L15 15" fill="none" stroke="#6a6a6a" stroke-width="1.1"/></svg>
<div class="a" style="left:752.8px;top:651.3px;width:51px;height:19.3px;background:#242424;border:1px solid #2e2e2e;border-radius:5px"></div>
<div class="a" style="left:752.8px;top:651.3px;width:19px;height:19.3px;background:#454545;border-radius:5px 0 0 5px"></div>
<svg class="a" style="left:753px;top:652px;" width="19" height="18" viewBox="0 0 19 18"><path d="M7 12 L4.5 9 A5 5 0 1 1 12.5 9 L10 12" fill="none" stroke="#c0c0c0" stroke-width="2" stroke-linejoin="round"/></svg>
<svg class="a" style="left:773px;top:652px;" width="18" height="18" viewBox="0 0 18 18"><path d="M4 6 L16 6 M4 13 L16 13 M7 3 L7 16 M14 3 L14 16" stroke="#d0d0d0" stroke-width="1.1"/><rect x="3" y="3" width="5.5" height="5" fill="#e8e8e8"/></svg>
<svg class="a" style="left:792px;top:657.5px;" width="10" height="8" viewBox="0 0 10 8"><path d="M2 2.2 L5 5.2 L8 2.2" fill="none" stroke="#cfcfcf" stroke-width="1.2"/></svg>
<div class="a" style="left:806px;top:683px;width:3px;height:320px;background:#262626;border-radius:2px"></div>
<svg class="a" style="left:803px;top:688px;" width="8" height="14" viewBox="0 0 8 14"><path d="M6.5 2 L2.5 7 L6.5 12" fill="none" stroke="#9a9a9a" stroke-width="1.1"/></svg>
<div class="a" style="left:36px;top:686px;width:5px;height:12px;background:transparent;"></div>
<svg class="a" style="left:30px;top:685px;" width="8" height="14" viewBox="0 0 8 14"><path d="M2 2.5 L6 7 L2 11.5" fill="none" stroke="#9a9a9a" stroke-width="1.1"/></svg>
<div class="a" style="left:40px;top:1004px;width:765px;height:3px;background:#2e2e2e;border-radius:2px"></div>
<svg class="a" style="left:410px;top:740px;" width="62" height="35" viewBox="0 0 62 35"><path d="M5 7.4 C35 7.4 27 29 57 29" fill="none" stroke="#b4d8b0" stroke-width="1.6"/></svg>
<div class="a" style="left:248px;top:716.2px;width:167.3px;height:251.4px;background:#303030;border:1px solid #dc7420;border-radius:5px;box-shadow:0 2px 6px rgba(0,0,0,.45)"></div>
<div class="a" style="left:249px;top:717.2px;width:165.3px;height:17.6px;background:#852f4b;border-radius:4px 4px 0 0"></div>
<svg class="a" style="left:256px;top:720px;" width="10" height="10" viewBox="0 0 10 10"><path d="M2 3 L5 6 L8 3" fill="none" stroke="#dcdcdc" stroke-width="1.1"/></svg>
<div class="t" style="left:270.10px;top:721.05px;font-size:11px;color:#e6e6e6;transform:scaleX(0.9134);">Glass Material</div>
<div class="t" style="left:368.56px;top:742.45px;font-size:11px;color:#dcdcdc;transform:scaleX(0.9491);">Material</div>
<div class="a" style="left:257.7px;top:767.8px;width:11.3px;height:11px;background:#545454;border-radius:3px"></div>
<div class="t" style="left:271.58px;top:768.35px;font-size:11px;color:#dcdcdc;transform:scaleX(0.9318);">Rough</div>
<div class="a" style="left:257.7px;top:789.3px;width:11.3px;height:11px;background:#545454;border-radius:3px"></div>
<div class="t" style="left:272.40px;top:789.85px;font-size:11px;color:#dcdcdc;transform:scaleX(0.9140);">Architectural</div>
<div class="a" style="left:257.7px;top:810.9px;width:11.3px;height:11px;background:#545454;border-radius:3px"></div>
<div class="t" style="left:272.20px;top:811.45px;font-size:11px;color:#dcdcdc;transform:scaleX(0.9021);">Thin Film Coating</div>
<div class="a" style="left:243.3px;top:833.1999999999999px;width:9.4px;height:9.4px;border-radius:50%;background:#c7c729;border:1px solid #1a1a1a"></div>
<div class="t" style="left:257.80px;top:832.95px;font-size:11px;color:#dcdcdc;transform:scaleX(0.9059);">Transmission Color</div>
<div class="a" style="left:362.9px;top:830px;width:42.1px;height:15.8px;background:#fff;border-radius:3px"></div>
<div class="a" style="left:243.3px;top:853.3px;width:9.4px;height:9.4px;border-radius:50%;background:#c7c729;border:1px solid #1a1a1a"></div>
<div class="t" style="left:257.19px;top:853.05px;font-size:11px;color:#dcdcdc;transform:scaleX(0.9169);">Reflection Color</div>
<div class="a" style="left:362.9px;top:850.9px;width:42.1px;height:15.4px;background:#fff;border-radius:3px"></div>
<div class="a" style="left:257.7px;top:869.5px;width:147.3px;height:16.200000000000045px;background:#545454;border-radius:3px"></div>
<div class="a" style="left:243.3px;top:872.9px;width:9.4px;height:9.4px;border-radius:50%;background:#a1a1a1;border:1px solid #1a1a1a"></div>
<div class="t" style="left:269.67px;top:872.65px;font-size:11px;color:#e6e6e6;transform:scaleX(0.9368);">IOR</div>
<div class="t" style="left:367.78px;top:872.65px;font-size:11px;color:#e6e6e6;transform:scaleX(0.9429);">2.000</div>
<div class="a" style="left:257.7px;top:889.7px;width:147.3px;height:15.799999999999955px;background:#545454;border-radius:3px"></div>
<div class="a" style="left:243.3px;top:892.9px;width:9.4px;height:9.4px;border-radius:50%;background:#a1a1a1;border:1px solid #1a1a1a"></div>
<div class="t" style="left:269.76px;top:892.65px;font-size:11px;color:#e6e6e6;transform:scaleX(0.9547);">Dispersion</div>
<div class="t" style="left:356.39px;top:892.65px;font-size:11px;color:#e6e6e6;transform:scaleX(0.9399);">0.00000</div>
<div class="a" style="left:257.7px;top:909px;width:147.3px;height:15.5px;background:#545454;border-radius:3px"></div>
<div class="a" style="left:243.3px;top:912.05px;width:9.4px;height:9.4px;border-radius:50%;background:#a1a1a1;border:1px solid #1a1a1a"></div>
<div class="a" style="left:257.7px;top:909px;width:72.9px;height:15.5px;background:#4772b3;border-radius:3px 0 0 3px"></div>
<div class="t" style="left:270.09px;top:911.80px;font-size:11px;color:#e6e6e6;transform:scaleX(0.9281);">Opacity</div>
<div class="t" style="left:368.60px;top:911.80px;font-size:11px;color:#e6e6e6;transform:scaleX(0.9128);">0.500</div>
<div class="a" style="left:243.3px;top:930.5999999999999px;width:9.4px;height:9.4px;border-radius:50%;background:#e02828;border:1px solid #1a1a1a"></div>
<div class="t" style="left:257.17px;top:930.35px;font-size:11px;color:#dcdcdc;transform:scaleX(0.9418);">Bump</div>
<div class="a" style="left:243.3px;top:949.3px;width:9.4px;height:9.4px;border-radius:50%;background:#eeeeee;border:1px solid #1a1a1a"></div>
<div class="t" style="left:257.19px;top:949.05px;font-size:11px;color:#dcdcdc;transform:scaleX(0.9184);">Emission</div>
<div class="a" style="left:332.4px;top:946.4px;width:72.6px;height:15.8px;background:#545454;border-radius:3px"></div>
<div class="t" style="left:338.46px;top:948.54px;font-size:12px;color:#e0e0e0;">+</div>
<div class="t" style="left:367.60px;top:949.05px;font-size:11px;color:#e6e6e6;transform:scaleX(0.9357);">Add</div>
<div class="a" style="left:410.3px;top:742.6999999999999px;width:9.4px;height:9.4px;border-radius:50%;background:#63c763;border:1px solid #1a1a1a"></div>
<div class="a" style="left:467px;top:717.2px;width:192.2px;height:123.6px;background:#29452a;border:1px solid #1a1a1a;border-radius:5px;box-shadow:0 2px 6px rgba(0,0,0,.45)"></div>
<div class="a" style="left:468px;top:718.2px;width:190.2px;height:16.6px;background:#852f4b;border-radius:4px 4px 0 0"></div>
<svg class="a" style="left:475px;top:721px;" width="10" height="10" viewBox="0 0 10 10"><path d="M2 3 L5 6 L8 3" fill="none" stroke="#dcdcdc" stroke-width="1.1"/></svg>
<div class="t" style="left:488.49px;top:721.05px;font-size:11px;color:#e6e6e6;transform:scaleX(0.9185);">Material Output</div>
<div class="a" style="left:476px;top:741.6px;width:11.5px;height:11.5px;background:#4772b3;border-radius:3px"></div>
<svg class="a" style="left:476px;top:741.6px;" width="12" height="12" viewBox="0 0 12 12"><path d="M2.5 6 L5 8.5 L9.5 3.5" fill="none" stroke="#fff" stroke-width="1.6"/></svg>
<div class="t" style="left:490.40px;top:742.45px;font-size:11px;color:#e6e6e6;transform:scaleX(0.9498);">Active</div>
<svg class="a" style="left:572px;top:742px;" width="10" height="10" viewBox="0 0 10 10"><path d="M2 1 L8 5 L2 9 Z" fill="#e0e0e0"/></svg>
<div class="t" style="left:593.90px;top:742.45px;font-size:11px;color:#e6e6e6;transform:scaleX(0.9319);">Advanced</div>
<div class="a" style="left:462.3px;top:764.3px;width:9.4px;height:9.4px;border-radius:50%;background:#63c763;border:1px solid #1a1a1a"></div>
<div class="t" style="left:475.56px;top:764.05px;font-size:11px;color:#dcdcdc;transform:scaleX(0.9491);">Material</div>
<div class="a" style="left:462.3px;top:784.0px;width:9.4px;height:9.4px;border-radius:50%;background:#e96f4d;border:1px solid #1a1a1a"></div>
<div class="t" style="left:475.47px;top:783.75px;font-size:11px;color:#dcdcdc;transform:scaleX(0.9367);">Interior Volume</div>
<div class="a" style="left:563.3px;top:780.8px;width:86.2px;height:16.2px;background:#545454;border-radius:3px"></div>
<div class="t" style="left:569.46px;top:783.24px;font-size:12px;color:#e0e0e0;">+</div>
<div class="t" style="left:605.40px;top:783.75px;font-size:11px;color:#e6e6e6;transform:scaleX(0.9516);">Add</div>
<div class="a" style="left:462.3px;top:803.8px;width:9.4px;height:9.4px;border-radius:50%;background:#e96f4d;border:1px solid #1a1a1a"></div>
<div class="t" style="left:475.58px;top:803.55px;font-size:11px;color:#dcdcdc;transform:scaleX(0.9288);">Exterior Volume</div>
<div class="a" style="left:563.3px;top:800.6px;width:86.2px;height:16.3px;background:#545454;border-radius:3px"></div>
<div class="t" style="left:569.46px;top:803.04px;font-size:12px;color:#e0e0e0;">+</div>
<div class="t" style="left:605.40px;top:803.55px;font-size:11px;color:#e6e6e6;transform:scaleX(0.9516);">Add</div>
<div class="a" style="left:462.3px;top:823.1999999999999px;width:9.4px;height:9.4px;border-radius:50%;background:#1fa58a;border:1px solid #1a1a1a"></div>
<div class="t" style="left:475.91px;top:822.95px;font-size:11px;color:#dcdcdc;transform:scaleX(0.8964);">Shape [Using Base Mesh]</div>
<div class="a" style="left:814px;top:93px;width:369px;height:284px;background:#282828;border-radius:6px;overflow:hidden"></div>
<div class="a" style="left:814px;top:140px;width:369px;height:20px;background:#2b2b2b;"></div>
<div class="a" style="left:814px;top:180px;width:369px;height:20px;background:#2b2b2b;"></div>
<div class="a" style="left:814px;top:220px;width:369px;height:20px;background:#2b2b2b;"></div>
<div class="a" style="left:814px;top:260px;width:369px;height:20px;background:#2b2b2b;"></div>
<div class="a" style="left:814px;top:300px;width:369px;height:20px;background:#2b2b2b;"></div>
<div class="a" style="left:814px;top:340px;width:369px;height:20px;background:#2b2b2b;"></div>
<div class="a" style="left:814px;top:357px;width:369px;height:20px;background:#282828;border-radius:0 0 6px 6px"></div>
<div class="a" style="left:814px;top:360px;width:369px;height:17px;background:#2b2b2b;border-radius:0 0 6px 6px"></div>
<div class="a" style="left:814px;top:93px;width:369px;height:27px;background:#282828;border-radius:6px 6px 0 0"></div>
<div class="a" style="left:821.5px;top:96px;width:32.1px;height:19px;background:#242424;border:1px solid #333;border-radius:5px"></div>
<svg class="a" style="left:824px;top:97px;" width="18" height="17" viewBox="0 0 18 17"><rect x="2" y="2" width="6" height="3" fill="#e0e0e0"/><path d="M4 5 L4 13 L8 13 M4 9 L8 9" fill="none" stroke="#cfcfcf" stroke-width="1"/><rect x="8" y="8" width="8" height="3" fill="#e0e0e0"/><rect x="8" y="12" width="8" height="3" fill="#e0e0e0"/></svg>
<svg class="a" style="left:842.5px;top:102px;" width="10" height="8" viewBox="0 0 10 8"><path d="M2 2.2 L5 5.2 L8 2.2" fill="none" stroke="#cfcfcf" stroke-width="1.2"/></svg>
<div class="a" style="left:858.5px;top:96px;width:31.7px;height:19px;background:#242424;border:1px solid #333;border-radius:5px"></div>
<svg class="a" style="left:861px;top:97px;" width="18" height="17" viewBox="0 0 18 17"><rect x="2" y="6" width="9" height="9" fill="none" stroke="#9a9a9a" stroke-width="1"/><rect x="4" y="4" width="9" height="9" fill="#242424" stroke="#bdbdbd" stroke-width="1"/><rect x="6" y="2" width="10" height="9" fill="#242424" stroke="#e0e0e0" stroke-width="1.2"/><path d="M7 10 L10 5.5 L13 10 Z" fill="#e0e0e0"/></svg>
<svg class="a" style="left:879px;top:102px;" width="10" height="8" viewBox="0 0 10 8"><path d="M2 2.2 L5 5.2 L8 2.2" fill="none" stroke="#cfcfcf" stroke-width="1.2"/></svg>
<div class="a" style="left:930.2px;top:96px;width:114.1px;height:19px;background:#1f1f1f;border:1px solid #3a3a3a;border-radius:5px"></div>
<svg class="a" style="left:934px;top:97px;" width="16" height="17" viewBox="0 0 16 17"><circle cx="9" cy="7" r="4.3" fill="none" stroke="#e0e0e0" stroke-width="1.3"/><path d="M6 10 L2 14.5" stroke="#e0e0e0" stroke-width="1.5"/></svg>
<div class="a" style="left:1117.9px;top:96px;width:32.1px;height:19px;background:#242424;border:1px solid #333;border-radius:5px"></div>
<svg class="a" style="left:1120px;top:97px;" width="18" height="17" viewBox="0 0 18 17"><path d="M2 3 L15 3 L10 9 L10 15 L7.5 13 L7.5 9 Z" fill="none" stroke="#e0e0e0" stroke-width="1.2"/></svg>
<svg class="a" style="left:1138.5px;top:102.5px;" width="10" height="8" viewBox="0 0 10 8"><path d="M2 2.2 L5 5.2 L8 2.2" fill="none" stroke="#cfcfcf" stroke-width="1.2"/></svg>
<div class="a" style="left:1154.5px;top:96px;width:20px;height:19px;background:#3d3d3d;border-radius:5px"></div>
<svg class="a" style="left:1155px;top:97px;" width="19" height="17" viewBox="0 0 19 17"><rect x="4" y="5" width="9" height="10" fill="none" stroke="#cfcfcf" stroke-width="1.2"/><rect x="7" y="8" width="4" height="1.5" fill="#cfcfcf"/><circle cx="13.5" cy="4.5" r="3.5" fill="#cfcfcf"/><path d="M13.5 2.5 L13.5 6.5 M11.5 4.5 L15.5 4.5" stroke="#3d3d3d" stroke-width="1.1"/></svg>
<div class="a" style="left:834.3px;top:120.7px;width:19.9px;height:17.3px;background:#454545;border-radius:4px"></div>
<svg class="a" style="left:836px;top:121px;" width="16" height="16" viewBox="0 0 16 16"><rect x="2" y="2" width="12" height="3.5" fill="#e6e6e6"/><path d="M3 6.5 L13 6.5 L13 14 L3 14 Z" fill="#e6e6e6"/><rect x="6.5" y="8" width="3" height="1.4" fill="#333"/></svg>
<div class="t" style="left:857.23px;top:124.64px;font-size:12px;color:#dcdcdc;transform:scaleX(0.9495);">Scene Collection</div>
<svg class="a" style="left:838px;top:145px;" width="10" height="10" viewBox="0 0 10 10"><path d="M1.5 2 L8.5 2 L5 8.5 Z" fill="#cfcfcf"/></svg>
<svg class="a" style="left:856px;top:142px;" width="16" height="16" viewBox="0 0 16 16"><rect x="2" y="2" width="12" height="3.5" fill="#e6e6e6"/><path d="M3 6.5 L13 6.5 L13 14 L3 14 Z" fill="#e6e6e6"/><rect x="6.5" y="8" width="3" height="1.4" fill="#333"/></svg>
<div class="t" style="left:877.12px;top:144.54px;font-size:12px;color:#dcdcdc;transform:scaleX(0.9719);">Collection</div>
<div class="a" style="left:842.2px;top:163.5px;width:1px;height:70px;background:#555;"></div>
<svg class="a" style="left:1116px;top:143px;" width="14" height="14" viewBox="0 0 14 14"><rect x="1.5" y="1.5" width="11" height="11" rx="2" fill="#e6e6e6"/><path d="M3.5 7 L6 9.5 L10.5 4.5" fill="none" stroke="#222" stroke-width="1.6"/></svg>
<svg class="a" style="left:1136.5px;top:143px;" width="14" height="14" viewBox="0 0 14 14"><path d="M1.5 7 Q7 1 12.5 7 Q7 13 1.5 7 Z" fill="none" stroke="#e6e6e6" stroke-width="1.4"/><circle cx="7" cy="7" r="2.3" fill="#e6e6e6"/></svg>
<svg class="a" style="left:1157px;top:143px;" width="14" height="14" viewBox="0 0 14 14"><path d="M1.5 4 L4 4 L5 2 L9 2 L10 4 L12.5 4 L12.5 12 L1.5 12 Z" fill="none" stroke="#e6e6e6" stroke-width="1.3"/><circle cx="7" cy="7.8" r="2.6" fill="none" stroke="#e6e6e6" stroke-width="1.3"/><circle cx="7" cy="7.8" r="1" fill="#e6e6e6"/></svg>
<svg class="a" style="left:1136.5px;top:163px;" width="14" height="14" viewBox="0 0 14 14"><path d="M1.5 7 Q7 1 12.5 7 Q7 13 1.5 7 Z" fill="none" stroke="#e6e6e6" stroke-width="1.4"/><circle cx="7" cy="7" r="2.3" fill="#e6e6e6"/></svg>
<svg class="a" style="left:1157px;top:163px;" width="14" height="14" viewBox="0 0 14 14"><path d="M1.5 4 L4 4 L5 2 L9 2 L10 4 L12.5 4 L12.5 12 L1.5 12 Z" fill="none" stroke="#e6e6e6" stroke-width="1.3"/><circle cx="7" cy="7.8" r="2.6" fill="none" stroke="#e6e6e6" stroke-width="1.3"/><circle cx="7" cy="7.8" r="1" fill="#e6e6e6"/></svg>
<svg class="a" style="left:1136.5px;top:183px;" width="14" height="14" viewBox="0 0 14 14"><path d="M1.5 7 Q7 1 12.5 7 Q7 13 1.5 7 Z" fill="none" stroke="#e6e6e6" stroke-width="1.4"/><circle cx="7" cy="7" r="2.3" fill="#e6e6e6"/></svg>
<svg class="a" style="left:1157px;top:183px;" width="14" height="14" viewBox="0 0 14 14"><path d="M1.5 4 L4 4 L5 2 L9 2 L10 4 L12.5 4 L12.5 12 L1.5 12 Z" fill="none" stroke="#e6e6e6" stroke-width="1.3"/><circle cx="7" cy="7.8" r="2.6" fill="none" stroke="#e6e6e6" stroke-width="1.3"/><circle cx="7" cy="7.8" r="1" fill="#e6e6e6"/></svg>
<svg class="a" style="left:1136.5px;top:203px;" width="14" height="14" viewBox="0 0 14 14"><path d="M1.5 7 Q7 1 12.5 7 Q7 13 1.5 7 Z" fill="none" stroke="#e6e6e6" stroke-width="1.4"/><circle cx="7" cy="7" r="2.3" fill="#e6e6e6"/></svg>
<svg class="a" style="left:1157px;top:203px;" width="14" height="14" viewBox="0 0 14 14"><path d="M1.5 4 L4 4 L5 2 L9 2 L10 4 L12.5 4 L12.5 12 L1.5 12 Z" fill="none" stroke="#e6e6e6" stroke-width="1.3"/><circle cx="7" cy="7.8" r="2.6" fill="none" stroke="#e6e6e6" stroke-width="1.3"/><circle cx="7" cy="7.8" r="1" fill="#e6e6e6"/></svg>
<svg class="a" style="left:1136.5px;top:223px;" width="14" height="14" viewBox="0 0 14 14"><path d="M1.5 7 Q7 1 12.5 7 Q7 13 1.5 7 Z" fill="none" stroke="#e6e6e6" stroke-width="1.4"/><circle cx="7" cy="7" r="2.3" fill="#e6e6e6"/></svg>
<svg class="a" style="left:1157px;top:223px;" width="14" height="14" viewBox="0 0 14 14"><path d="M1.5 4 L4 4 L5 2 L9 2 L10 4 L12.5 4 L12.5 12 L1.5 12 Z" fill="none" stroke="#e6e6e6" stroke-width="1.3"/><circle cx="7" cy="7.8" r="2.6" fill="none" stroke="#e6e6e6" stroke-width="1.3"/><circle cx="7" cy="7.8" r="1" fill="#e6e6e6"/></svg>
<svg class="a" style="left:1136.5px;top:243px;" width="14" height="14" viewBox="0 0 14 14"><path d="M1.5 7 Q7 1 12.5 7 Q7 13 1.5 7 Z" fill="none" stroke="#e6e6e6" stroke-width="1.4"/><circle cx="7" cy="7" r="2.3" fill="#e6e6e6"/></svg>
<svg class="a" style="left:1157px;top:243px;" width="14" height="14" viewBox="0 0 14 14"><path d="M1.5 4 L4 4 L5 2 L9 2 L10 4 L12.5 4 L12.5 12 L1.5 12 Z" fill="none" stroke="#e6e6e6" stroke-width="1.3"/><circle cx="7" cy="7.8" r="2.6" fill="none" stroke="#e6e6e6" stroke-width="1.3"/><circle cx="7" cy="7.8" r="1" fill="#e6e6e6"/></svg>
<svg class="a" style="left:859.3px;top:165px;" width="10" height="10" viewBox="0 0 10 10"><path d="M2 1.5 L8 5 L2 8.5 Z" fill="#cfcfcf"/></svg>
<svg class="a" style="left:859.3px;top:185px;" width="10" height="10" viewBox="0 0 10 10"><path d="M2 1.5 L8 5 L2 8.5 Z" fill="#cfcfcf"/></svg>
<svg class="a" style="left:859.3px;top:205px;" width="10" height="10" viewBox="0 0 10 10"><path d="M2 1.5 L8 5 L2 8.5 Z" fill="#cfcfcf"/></svg>
<svg class="a" style="left:839.4px;top:245px;" width="10" height="10" viewBox="0 0 10 10"><path d="M2 1.5 L8 5 L2 8.5 Z" fill="#cfcfcf"/></svg>
<div class="a" style="left:874.1px;top:160.5px;width:19.2px;height:19px;background:#4a4a4a;border-radius:4px"></div>
<svg class="a" style="left:875.5px;top:162px;" width="16" height="16" viewBox="0 0 16 16"><path d="M2.5 2.5 L13.5 2.5 L8 14 Z" fill="none" stroke="#f08a3a" stroke-width="2.4" stroke-linejoin="round"/></svg>
<div class="t" style="left:897.02px;top:164.54px;font-size:12px;color:#dcdcdc;transform:scaleX(0.9607);">Cube</div>
<svg class="a" style="left:946.5px;top:163px;" width="14" height="14" viewBox="0 0 14 14"><path d="M2 2.5 L12 2.5 L7 13 Z" fill="none" stroke="#1fbf8c" stroke-width="1.3"/><circle cx="2.5" cy="2.5" r="1.6" fill="#282828" stroke="#1fbf8c" stroke-width="1.1"/><circle cx="11.5" cy="2.5" r="1.6" fill="#282828" stroke="#1fbf8c" stroke-width="1.1"/><circle cx="7" cy="12.5" r="1.6" fill="#282828" stroke="#1fbf8c" stroke-width="1.1"/></svg>
<svg class="a" style="left:875.5px;top:182px;" width="16" height="16" viewBox="0 0 16 16"><circle cx="8" cy="6" r="4.8" fill="#f0a050"/><rect x="5.5" y="10" width="5" height="2" fill="#f0a050"/><rect x="6" y="13" width="4" height="1.6" fill="#f0a050"/><path d="M6 5 L8 8 L10 5" fill="none" stroke="#7a4a20" stroke-width="1"/></svg>
<div class="t" style="left:896.64px;top:184.54px;font-size:12px;color:#dcdcdc;">Light</div>
<svg class="a" style="left:944.6px;top:183px;" width="15" height="15" viewBox="0 0 15 15"><path d="M3 12 L11 4" stroke="#5a86d8" stroke-width="4" stroke-linecap="round"/><circle cx="5" cy="9.5" r="3.5" fill="#282828" stroke="#6a95e8" stroke-width="1.3"/><circle cx="5" cy="9.5" r="1.2" fill="#6a95e8"/><circle cx="10.5" cy="4" r="1.1" fill="#282828"/></svg>
<svg class="a" style="left:965.6px;top:183px;" width="15" height="15" viewBox="0 0 15 15"><path d="M13 2 C6 2 2 6 2.5 13 M13 2 C13 9 9 13 2.5 13 M6 9 L10 5" fill="none" stroke="#1fbf8c" stroke-width="1.2"/></svg>
<svg class="a" style="left:875.5px;top:202px;" width="16" height="16" viewBox="0 0 16 16"><path d="M2.5 2.5 L13.5 2.5 L8 14 Z" fill="none" stroke="#f08a3a" stroke-width="2.4" stroke-linejoin="round"/></svg>
<div class="t" style="left:896.68px;top:204.54px;font-size:12px;color:#dcdcdc;transform:scaleX(0.9568);">Plane</div>
<svg class="a" style="left:948.2px;top:203px;" width="14" height="14" viewBox="0 0 14 14"><path d="M2 2.5 L12 2.5 L7 13 Z" fill="none" stroke="#1fbf8c" stroke-width="1.3"/><circle cx="2.5" cy="2.5" r="1.6" fill="#282828" stroke="#1fbf8c" stroke-width="1.1"/><circle cx="11.5" cy="2.5" r="1.6" fill="#282828" stroke="#1fbf8c" stroke-width="1.1"/><circle cx="7" cy="12.5" r="1.6" fill="#282828" stroke="#1fbf8c" stroke-width="1.1"/></svg>
<svg class="a" style="left:875px;top:222px;" width="17" height="16" viewBox="0 0 17 16"><path d="M8.5 2 L8.5 9 L2 14 M8.5 9 L16 12" fill="none" stroke="#f08a3a" stroke-width="2"/></svg>
<div class="t" style="left:897.36px;top:224.54px;font-size:12px;color:#dcdcdc;transform:scaleX(0.9903);">Target - 0,0,0</div>
<svg class="a" style="left:855px;top:241px;" width="17" height="17" viewBox="0 0 17 17"><circle cx="5" cy="5" r="3.5" fill="#f08a3a"/><circle cx="11" cy="5" r="3.5" fill="#f08a3a"/><rect x="3" y="8.5" width="8.5" height="6" fill="#f08a3a"/><path d="M11.5 10 L15.5 8 L15.5 15 L11.5 13 Z" fill="#f08a3a"/><circle cx="5" cy="5" r="1.2" fill="#282828"/><circle cx="11" cy="5" r="1.2" fill="#282828"/></svg>
<div class="t" style="left:877.13px;top:244.54px;font-size:12px;color:#dcdcdc;transform:scaleX(0.9533);">Camera - Screen</div>
<svg class="a" style="left:986px;top:243px;" width="15" height="15" viewBox="0 0 15 15"><path d="M3 12 L11 4" stroke="#5a86d8" stroke-width="4" stroke-linecap="round"/><circle cx="5" cy="9.5" r="3.5" fill="#282828" stroke="#6a95e8" stroke-width="1.3"/><circle cx="5" cy="9.5" r="1.2" fill="#6a95e8"/><circle cx="10.5" cy="4" r="1.1" fill="#282828"/></svg>
<div class="a" style="left:1003.5px;top:240.5px;width:20px;height:19px;background:#4a4a4a;border-radius:4px"></div>
<svg class="a" style="left:1005px;top:242px;" width="17" height="16" viewBox="0 0 17 16"><circle cx="6" cy="5" r="3" fill="none" stroke="#1fbf8c" stroke-width="1.2"/><circle cx="11" cy="5" r="3" fill="none" stroke="#1fbf8c" stroke-width="1.2"/><rect x="4" y="8.5" width="7.5" height="5" fill="none" stroke="#1fbf8c" stroke-width="1.2"/><path d="M11.5 10 L15 8.5 L15 14 L11.5 12.5" fill="none" stroke="#1fbf8c" stroke-width="1.2"/></svg>
<div class="a" style="left:814px;top:380px;width:369px;height:628px;background:#2b2b2b;border-radius:6px;overflow:hidden"></div>
<div class="a" style="left:822px;top:382px;width:31.4px;height:19px;background:#242424;border:1px solid #333;border-radius:5px"></div>
<svg class="a" style="left:825px;top:383px;" width="18" height="17" viewBox="0 0 18 17"><rect x="1.5" y="2" width="10" height="5.5" rx="2.7" fill="#e0e0e0"/><rect x="1.5" y="9.5" width="10" height="5.5" rx="2.7" fill="#e0e0e0"/><circle cx="4.5" cy="4.7" r="1.8" fill="#333"/><circle cx="8.5" cy="12.2" r="1.8" fill="#333"/></svg>
<svg class="a" style="left:843px;top:388px;" width="10" height="8" viewBox="0 0 10 8"><path d="M2 2.2 L5 5.2 L8 2.2" fill="none" stroke="#cfcfcf" stroke-width="1.2"/></svg>
<div class="a" style="left:942.5px;top:382px;width:113.8px;height:19px;background:#1f1f1f;border:1px solid #3a3a3a;border-radius:5px"></div>
<svg class="a" style="left:946px;top:383px;" width="16" height="17" viewBox="0 0 16 17"><circle cx="9" cy="7" r="4.3" fill="none" stroke="#e0e0e0" stroke-width="1.3"/><path d="M6 10 L2 14.5" stroke="#e0e0e0" stroke-width="1.5"/></svg>
<div class="a" style="left:1155px;top:382px;width:19px;height:19px;background:#262626;border:1px solid #333;border-radius:5px"></div>
<svg class="a" style="left:1159.5px;top:388px;" width="10" height="8" viewBox="0 0 10 8"><path d="M2 2.2 L5 5.2 L8 2.2" fill="none" stroke="#cfcfcf" stroke-width="1.2"/></svg>
<div class="a" style="left:814px;top:404px;width:28px;height:604px;background:#1f1f1f;"></div>
<div class="a" style="left:815px;top:440.4px;width:27px;height:32.6px;background:#2b2b2b;border-radius:5px 0 0 5px"></div>
<svg class="a" style="left:819.5px;top:416.5px;" width="17" height="17" viewBox="0 0 17 17"><path d="M4 2 L4 9 M2.5 9 L5.5 9 L5.5 14 L2.5 14 Z" stroke="#e0e0e0" fill="#e0e0e0" stroke-width="1.2"/><path d="M10 2 L10 5 L12 7 L14 5 L14 2 M12 7 L12 14" fill="none" stroke="#e0e0e0" stroke-width="1.6"/></svg>
<svg class="a" style="left:819.5px;top:448.5px;" width="17" height="17" viewBox="0 0 17 17"><rect x="2" y="6" width="13" height="9" rx="1" fill="#e0e0e0"/><rect x="4" y="2" width="5" height="4" fill="#e0e0e0"/><rect x="10" y="3" width="3" height="3" fill="#e0e0e0"/><rect x="4" y="9" width="3" height="2" fill="#333"/></svg>
<svg class="a" style="left:819.5px;top:479.5px;" width="17" height="17" viewBox="0 0 17 17"><rect x="2" y="2" width="13" height="5" fill="#e0e0e0"/><rect x="4" y="7" width="9" height="8" fill="none" stroke="#e0e0e0" stroke-width="1.4"/><rect x="6" y="9" width="5" height="4" fill="#e0e0e0"/></svg>
<svg class="a" style="left:819.5px;top:507.5px;" width="17" height="17" viewBox="0 0 17 17"><rect x="2" y="6" width="9" height="9" fill="none" stroke="#9a9a9a" stroke-width="1"/><rect x="4" y="4" width="9" height="9" fill="#1f1f1f" stroke="#bdbdbd" stroke-width="1"/><rect x="6" y="2" width="10" height="9" fill="#1f1f1f" stroke="#e0e0e0" stroke-width="1.2"/><path d="M7 10 L10 5.5 L13 10 Z" fill="#e0e0e0"/></svg>
<svg class="a" style="left:819.5px;top:535.5px;" width="17" height="17" viewBox="0 0 17 17"><path d="M6 3 L1.5 13 L7.5 13 Z" fill="#e0e0e0"/><circle cx="12" cy="4" r="1.8" fill="#e0e0e0"/><circle cx="10.5" cy="11" r="3.5" fill="#1f1f1f" stroke="#e0e0e0" stroke-width="1.3"/></svg>
<svg class="a" style="left:819.5px;top:563.5px;" width="17" height="17" viewBox="0 0 17 17"><circle cx="8.5" cy="8.5" r="6.3" fill="none" stroke="#c85050" stroke-width="1.6"/><path d="M4.5 4 Q9 6 6 9.5 Q9 11 8 15 M10 2.5 Q10 6 14.5 7.5" fill="none" stroke="#c85050" stroke-width="1.6"/><path d="M2 13 Q8.5 17 15 13" fill="none" stroke="#c85050" stroke-width="1.2"/></svg>
<svg class="a" style="left:819.5px;top:598.5px;" width="17" height="17" viewBox="0 0 17 17"><rect x="2" y="2" width="13" height="13" fill="none" stroke="#e8892f" stroke-width="1.4" stroke-dasharray="4 5"/><rect x="4.5" y="4.5" width="8" height="8" fill="#e8892f"/></svg>
<svg class="a" style="left:819.5px;top:627.5px;" width="17" height="17" viewBox="0 0 17 17"><path d="M3 14.5 L9 8.5" stroke="#5a8fe0" stroke-width="3.2" stroke-linecap="round"/><path d="M8.5 9.5 A4.8 4.8 0 0 1 12 2.5 L10 5.5 L11.8 7.2 L14.8 5.2 A4.8 4.8 0 0 1 8.5 9.5 Z" fill="#5a8fe0"/></svg>
<svg class="a" style="left:819.5px;top:654.5px;" width="17" height="17" viewBox="0 0 17 17"><circle cx="3.5" cy="3.5" r="2" fill="#5a8fe0"/><circle cx="13.5" cy="4" r="2" fill="#5a8fe0"/><circle cx="12.5" cy="13.5" r="2" fill="#5a8fe0"/><path d="M3.5 3.5 L3.5 15 M3.5 8 L13.5 4 M3.5 8 L12.5 13.5" stroke="#5a8fe0" stroke-width="1.4"/></svg>
<svg class="a" style="left:819.5px;top:682.5px;" width="17" height="17" viewBox="0 0 17 17"><circle cx="9" cy="9" r="6" fill="none" stroke="#5a8fe0" stroke-width="2"/><circle cx="9.5" cy="8.5" r="2.5" fill="#5a8fe0"/></svg>
<svg class="a" style="left:819.5px;top:710.5px;" width="17" height="17" viewBox="0 0 17 17"><path d="M3 12 L11 4" stroke="#5a86d8" stroke-width="4" stroke-linecap="round"/><circle cx="5.5" cy="10" r="4" fill="#1f1f1f" stroke="#6a95e8" stroke-width="1.4"/><circle cx="5.5" cy="10" r="1.3" fill="#6a95e8"/><circle cx="12" cy="4" r="1.2" fill="#1f1f1f"/></svg>
<svg class="a" style="left:819.5px;top:738.5px;" width="17" height="17" viewBox="0 0 17 17"><path d="M2.5 3 L14.5 3 L8.5 15 Z" fill="none" stroke="#1fbf8c" stroke-width="1.4"/><circle cx="2.5" cy="3" r="1.8" fill="#1f1f1f" stroke="#1fbf8c" stroke-width="1.2"/><circle cx="14.5" cy="3" r="1.8" fill="#1f1f1f" stroke="#1fbf8c" stroke-width="1.2"/><circle cx="8.5" cy="14.5" r="1.8" fill="#1f1f1f" stroke="#1fbf8c" stroke-width="1.2"/></svg>
<svg class="a" style="left:819.5px;top:767.5px;" width="17" height="17" viewBox="0 0 17 17"><circle cx="8.5" cy="8.5" r="6.8" fill="#c84a55"/><path d="M8.5 1.7 A6.8 6.8 0 0 1 15.3 8.5 L8.5 8.5 Z M8.5 8.5 L8.5 15.3 A6.8 6.8 0 0 1 1.7 8.5 Z" fill="#1f1f1f"/><circle cx="8.5" cy="8.5" r="6.8" fill="none" stroke="#c84a55" stroke-width="1"/></svg>
<svg class="a" style="left:819.5px;top:802.5px;" width="17" height="17" viewBox="0 0 17 17"><g fill="#c84a55"><rect x="1.5" y="1.5" width="2.8" height="2.8"/><rect x="1.5" y="7.1" width="2.8" height="2.8"/><rect x="1.5" y="12.7" width="2.8" height="2.8"/><rect x="4.3" y="4.3" width="2.8" height="2.8"/><rect x="4.3" y="9.899999999999999" width="2.8" height="2.8"/><rect x="7.1" y="1.5" width="2.8" height="2.8"/><rect x="7.1" y="7.1" width="2.8" height="2.8"/><rect x="7.1" y="12.7" width="2.8" height="2.8"/><rect x="9.899999999999999" y="4.3" width="2.8" height="2.8"/><rect x="9.899999999999999" y="9.899999999999999" width="2.8" height="2.8"/><rect x="12.7" y="1.5" width="2.8" height="2.8"/><rect x="12.7" y="7.1" width="2.8" height="2.8"/><rect x="12.7" y="12.7" width="2.8" height="2.8"/></g></svg>
<svg class="a" style="left:851px;top:413px;" width="17" height="17" viewBox="0 0 17 17"><path d="M6 3 L1.5 13 L7.5 13 Z" fill="#e0e0e0"/><circle cx="12" cy="4" r="1.8" fill="#e0e0e0"/><circle cx="10.5" cy="11.5" r="3.5" fill="#2b2b2b" stroke="#e0e0e0" stroke-width="1.3"/></svg>
<div class="t" style="left:874.64px;top:416.39px;font-size:11.5px;color:#e0e0e0;transform:scaleX(0.9775);">Scene</div>
<svg class="a" style="left:1157px;top:413px;" width="17" height="17" viewBox="0 0 17 17"><path d="M11 2 L16 7 L13.5 8 L10.5 11 L10.5 13.5 L4.5 7.5 L7 7.5 L10 4.5 Z M7 11 L3 15" fill="none" stroke="#8a8a8a" stroke-width="1.2"/></svg>
<div class="a" style="left:1177px;top:412px;width:3.5px;height:580px;background:#393939;border-radius:2px"></div>
<div class="t" style="left:900.60px;top:452.74px;font-size:11.5px;color:#d8d8d8;transform:scaleX(0.9813);">Render Engine</div>
<div class="a" style="left:984.7px;top:448.9px;width:189.3px;height:18.100000000000023px;background:#232323;border:1px solid #303030;border-radius:4px"></div>
<div class="t" style="left:991.08px;top:452.74px;font-size:11.5px;color:#e0e0e0;">LuxCoreRender</div>
<svg class="a" style="left:1162px;top:454.45px;" width="12" height="9" viewBox="0 0 12 9"><path d="M2 2.5 L6 6.5 L10 2.5" fill="none" stroke="#d0d0d0" stroke-width="1.1"/></svg>
<div class="t" style="left:890.91px;top:477.64px;font-size:11.5px;color:#d8d8d8;transform:scaleX(1.0220);">Compute device</div>
<div class="a" style="left:984.7px;top:473.7px;width:189.3px;height:18.30000000000001px;background:#232323;border:1px solid #303030;border-radius:4px"></div>
<div class="t" style="left:1009.02px;top:477.64px;font-size:11.5px;color:#e0e0e0;">GPU</div>
<svg class="a" style="left:1162px;top:479.35px;" width="12" height="9" viewBox="0 0 12 9"><path d="M2 2.5 L6 6.5 L10 2.5" fill="none" stroke="#d0d0d0" stroke-width="1.1"/></svg>
<div class="t" style="left:880.55px;top:502.44px;font-size:11.5px;color:#d8d8d8;transform:scaleX(1.0312);">Lighting integrator</div>
<div class="a" style="left:984.7px;top:498.3px;width:189.3px;height:18.69999999999999px;background:#232323;border:1px solid #303030;border-radius:4px"></div>
<div class="t" style="left:1008.68px;top:502.44px;font-size:11.5px;color:#e0e0e0;">Pathtracing</div>
<svg class="a" style="left:1162px;top:504.15px;" width="12" height="9" viewBox="0 0 12 9"><path d="M2 2.5 L6 6.5 L10 2.5" fill="none" stroke="#d0d0d0" stroke-width="1.1"/></svg>
<svg class="a" style="left:989px;top:475px;" width="15" height="16" viewBox="0 0 15 16"><rect x="3.5" y="4" width="8" height="8" fill="none" stroke="#d8d8d8" stroke-width="1.1"/><rect x="5.5" y="6" width="4" height="4" fill="none" stroke="#d8d8d8" stroke-width="1"/><path d="M5 1.5 L5 4 M7.5 1.5 L7.5 4 M10 1.5 L10 4 M5 12 L5 14.5 M7.5 12 L7.5 14.5 M10 12 L10 14.5 M1 6 L3.5 6 M1 8 L3.5 8 M1 10 L3.5 10 M11.5 6 L14 6 M11.5 8 L14 8 M11.5 10 L14 10" stroke="#d8d8d8" stroke-width="0.9"/></svg>
<svg class="a" style="left:989px;top:499px;" width="15" height="17" viewBox="0 0 15 17"><circle cx="7.5" cy="6.5" r="5" fill="#e0e0e0"/><rect x="5" y="11" width="5" height="1.8" fill="#e0e0e0"/><rect x="5.5" y="13.5" width="4" height="1.6" fill="#e0e0e0"/><path d="M5.5 5.5 L7.5 8.5 L9.5 5.5" fill="none" stroke="#444" stroke-width="1"/></svg>
<div class="a" style="left:850.3px;top:523.2px;width:156.8px;height:18.2px;background:#545454;border-radius:4px"></div>
<div class="a" style="left:852px;top:524.5px;width:16.5px;height:15.5px;background:#e8762a;border:1px solid #f4a070;border-radius:2px"></div>
<svg class="a" style="left:853px;top:525px;" width="15" height="14" viewBox="0 0 15 14"><path d="M5 9 L10 4" stroke="#fff" stroke-width="1.2"/><rect x="2" y="7.5" width="5" height="3" rx="1.5" fill="none" stroke="#fff" stroke-width="1.1" transform="rotate(-45 4.5 9)"/><rect x="8" y="3" width="5" height="3" rx="1.5" fill="none" stroke="#fff" stroke-width="1.1" transform="rotate(-45 10.5 4.5)"/></svg>
<div class="t" style="left:885.48px;top:527.09px;font-size:11.5px;color:#e0e0e0;">Use Cycles Settings</div>
<div class="a" style="left:1017.2px;top:523.2px;width:156.8px;height:18.2px;background:#545454;border-radius:4px"></div>
<svg class="a" style="left:1019px;top:524px;" width="17" height="17" viewBox="0 0 17 17"><circle cx="8.5" cy="8.5" r="7.5" fill="#f5881f"/><path d="M6 6.5 Q6 4 8.5 4 Q11 4 11 6.3 Q11 8 8.5 9 L8.5 10.5" fill="none" stroke="#fff" stroke-width="1.6"/><circle cx="8.5" cy="12.8" r="1.1" fill="#fff"/></svg>
<div class="t" style="left:1044.08px;top:527.09px;font-size:11.5px;color:#e0e0e0;">Render Settings Helper</div>
<div class="a" style="left:850.3px;top:552px;width:325.2px;height:199.1px;background:#3d3d3d;border-radius:4px"></div>
<div class="a" style="left:850.3px;top:602px;width:325.2px;height:149.1px;background:#3a3a3a;border-radius:0 0 4px 4px"></div>
<div class="a" style="left:850.3px;top:602px;width:325.2px;height:100px;background:#373737;border-radius:0 0 4px 4px"></div>
<svg class="a" style="left:856px;top:559.5px;" width="12" height="9" viewBox="0 0 12 9"><path d="M2 2.5 L6 6.5 L10 2.5" fill="none" stroke="#bdbdbd" stroke-width="1.1"/></svg>
<svg class="a" style="left:871px;top:557.2px;" width="18" height="15" viewBox="0 0 18 15"><g fill="#f07a20"><circle cx="1.8" cy="7.5" r="1" opacity=".55"/><circle cx="4.6" cy="4.7" r="1.1" opacity=".7"/><circle cx="4.6" cy="10.3" r="1.1" opacity=".7"/><circle cx="7.5" cy="1.6" r="1.2" opacity=".8"/><circle cx="7.5" cy="7.5" r="1.2" opacity=".8"/><circle cx="7.5" cy="13.4" r="1.2" opacity=".8"/></g><path d="M10 3 L15.5 7.5 L10 12 L11.3 7.5 Z" fill="#f57a1a" stroke="#f57a1a" stroke-width="2.4" stroke-linejoin="round"/></svg>
<div class="t" style="left:890.38px;top:559.49px;font-size:11.5px;color:#e0e0e0;">Light Paths</div>
<svg class="a" style="left:1156px;top:560px;" width="14" height="6" viewBox="0 0 14 6"><rect x="1" y="1" width="1.6" height="1.6" fill="#9a9a9a"/><rect x="1" y="4" width="1.6" height="1.6" fill="#9a9a9a"/><rect x="4" y="1" width="1.6" height="1.6" fill="#9a9a9a"/><rect x="4" y="4" width="1.6" height="1.6" fill="#9a9a9a"/><rect x="7" y="1" width="1.6" height="1.6" fill="#9a9a9a"/><rect x="7" y="4" width="1.6" height="1.6" fill="#9a9a9a"/><rect x="10" y="1" width="1.6" height="1.6" fill="#9a9a9a"/><rect x="10" y="4" width="1.6" height="1.6" fill="#9a9a9a"/></svg>
<svg class="a" style="left:869.2px;top:584.5px;" width="12" height="9" viewBox="0 0 12 9"><path d="M2 2.5 L6 6.5 L10 2.5" fill="none" stroke="#bdbdbd" stroke-width="1.1"/></svg>
<div class="t" style="left:884.28px;top:583.79px;font-size:11.5px;color:#e0e0e0;">Max Bounces</div>
<div class="t" style="left:890.26px;top:614.24px;font-size:11.5px;color:#d8d8d8;transform:scaleX(1.0266);">Total Path Depth</div>
<div class="t" style="left:940.55px;top:639.29px;font-size:11.5px;color:#d8d8d8;transform:scaleX(1.0335);">Diffuse</div>
<div class="t" style="left:940.91px;top:657.94px;font-size:11.5px;color:#d8d8d8;transform:scaleX(1.0198);">Glossy</div>
<div class="t" style="left:931.93px;top:677.64px;font-size:11.5px;color:#d8d8d8;transform:scaleX(0.9928);">Specular</div>
<div class="a" style="left:986.5px;top:610.2px;width:179.9px;height:18.5px;background:#545454;border-radius:4px"></div>
<div class="a" style="left:986.5px;top:635.4px;width:179.9px;height:57.6px;background:#545454;border-radius:4px"></div>
<div class="a" style="left:986.5px;top:653.1px;width:179.9px;height:1px;background:#4a4a4a;"></div>
<div class="a" style="left:986.5px;top:672.2px;width:179.9px;height:1px;background:#4a4a4a;"></div>
<div class="t" style="left:1073.28px;top:614.29px;font-size:11.5px;color:#e6e6e6;">6</div>
<div class="t" style="left:1073.34px;top:639.29px;font-size:11.5px;color:#e6e6e6;">4</div>
<div class="t" style="left:1073.34px;top:657.99px;font-size:11.5px;color:#e6e6e6;">4</div>
<div class="t" style="left:1073.28px;top:677.69px;font-size:11.5px;color:#e6e6e6;">6</div>
<svg class="a" style="left:872.2px;top:708.8px;" width="9" height="12" viewBox="0 0 9 12"><path d="M2.5 2 L6.5 6 L2.5 10" fill="none" stroke="#bdbdbd" stroke-width="1.1"/></svg>
<div class="a" style="left:883.9px;top:707.8px;width:14px;height:14px;background:#545454;border-radius:3px"></div>
<div class="t" style="left:899.16px;top:709.59px;font-size:11.5px;color:#e0e0e0;transform:scaleX(1.0270);">Light Tracing</div>
<svg class="a" style="left:872.2px;top:734px;" width="9" height="12" viewBox="0 0 9 12"><path d="M2.5 2 L6.5 6 L2.5 10" fill="none" stroke="#bdbdbd" stroke-width="1.1"/></svg>
<div class="a" style="left:883.9px;top:733px;width:14px;height:14px;background:#545454;border-radius:3px"></div>
<div class="t" style="left:899.51px;top:734.79px;font-size:11.5px;color:#e0e0e0;transform:scaleX(1.0240);">Clamping</div>
<div class="a" style="left:850.3px;top:753.7px;width:325.2px;height:24.5px;background:#3d3d3d;border-radius:4px"></div>
<svg class="a" style="left:858.5px;top:760px;" width="9" height="12" viewBox="0 0 9 12"><path d="M2.5 2 L6.5 6 L2.5 10" fill="none" stroke="#bdbdbd" stroke-width="1.1"/></svg>
<svg class="a" style="left:871px;top:758.5px;" width="18" height="15" viewBox="0 0 18 15"><g fill="#f07a20"><circle cx="1.8" cy="7.5" r="1" opacity=".55"/><circle cx="4.6" cy="4.7" r="1.1" opacity=".7"/><circle cx="4.6" cy="10.3" r="1.1" opacity=".7"/><circle cx="7.5" cy="1.6" r="1.2" opacity=".8"/><circle cx="7.5" cy="7.5" r="1.2" opacity=".8"/><circle cx="7.5" cy="13.4" r="1.2" opacity=".8"/></g><path d="M10 3 L15.5 7.5 L10 12 L11.3 7.5 Z" fill="#f57a1a" stroke="#f57a1a" stroke-width="2.4" stroke-linejoin="round"/></svg>
<div class="t" style="left:890.62px;top:760.79px;font-size:11.5px;color:#e0e0e0;transform:scaleX(1.0156);">Sampling</div>
<svg class="a" style="left:1156px;top:763px;" width="14" height="6" viewBox="0 0 14 6"><rect x="1" y="1" width="1.6" height="1.6" fill="#9a9a9a"/><rect x="1" y="4" width="1.6" height="1.6" fill="#9a9a9a"/><rect x="4" y="1" width="1.6" height="1.6" fill="#9a9a9a"/><rect x="4" y="4" width="1.6" height="1.6" fill="#9a9a9a"/><rect x="7" y="1" width="1.6" height="1.6" fill="#9a9a9a"/><rect x="7" y="4" width="1.6" height="1.6" fill="#9a9a9a"/><rect x="10" y="1" width="1.6" height="1.6" fill="#9a9a9a"/><rect x="10" y="4" width="1.6" height="1.6" fill="#9a9a9a"/></svg>
<div class="a" style="left:850.3px;top:780.2px;width:325.2px;height:24.5px;background:#3d3d3d;border-radius:4px"></div>
<svg class="a" style="left:858.5px;top:786.5px;" width="9" height="12" viewBox="0 0 9 12"><path d="M2.5 2 L6.5 6 L2.5 10" fill="none" stroke="#bdbdbd" stroke-width="1.1"/></svg>
<svg class="a" style="left:871px;top:785.0px;" width="18" height="15" viewBox="0 0 18 15"><g fill="#f07a20"><circle cx="1.8" cy="7.5" r="1" opacity=".55"/><circle cx="4.6" cy="4.7" r="1.1" opacity=".7"/><circle cx="4.6" cy="10.3" r="1.1" opacity=".7"/><circle cx="7.5" cy="1.6" r="1.2" opacity=".8"/><circle cx="7.5" cy="7.5" r="1.2" opacity=".8"/><circle cx="7.5" cy="13.4" r="1.2" opacity=".8"/></g><path d="M10 3 L15.5 7.5 L10 12 L11.3 7.5 Z" fill="#f57a1a" stroke="#f57a1a" stroke-width="2.4" stroke-linejoin="round"/></svg>
<div class="a" style="left:895.4px;top:785.5px;width:13.3px;height:14px;background:#545454;border-radius:3px"></div>
<div class="t" style="left:910.36px;top:787.29px;font-size:11.5px;color:#e0e0e0;transform:scaleX(1.0163);">Denoiser</div>
<svg class="a" style="left:1156px;top:789.5px;" width="14" height="6" viewBox="0 0 14 6"><rect x="1" y="1" width="1.6" height="1.6" fill="#9a9a9a"/><rect x="1" y="4" width="1.6" height="1.6" fill="#9a9a9a"/><rect x="4" y="1" width="1.6" height="1.6" fill="#9a9a9a"/><rect x="4" y="4" width="1.6" height="1.6" fill="#9a9a9a"/><rect x="7" y="1" width="1.6" height="1.6" fill="#9a9a9a"/><rect x="7" y="4" width="1.6" height="1.6" fill="#9a9a9a"/><rect x="10" y="1" width="1.6" height="1.6" fill="#9a9a9a"/><rect x="10" y="4" width="1.6" height="1.6" fill="#9a9a9a"/></svg>
<div class="a" style="left:850.3px;top:806.7px;width:325.2px;height:24.5px;background:#3d3d3d;border-radius:4px"></div>
<svg class="a" style="left:858.5px;top:813px;" width="9" height="12" viewBox="0 0 9 12"><path d="M2.5 2 L6.5 6 L2.5 10" fill="none" stroke="#bdbdbd" stroke-width="1.1"/></svg>
<svg class="a" style="left:871px;top:811.5px;" width="18" height="15" viewBox="0 0 18 15"><g fill="#f07a20"><circle cx="1.8" cy="7.5" r="1" opacity=".55"/><circle cx="4.6" cy="4.7" r="1.1" opacity=".7"/><circle cx="4.6" cy="10.3" r="1.1" opacity=".7"/><circle cx="7.5" cy="1.6" r="1.2" opacity=".8"/><circle cx="7.5" cy="7.5" r="1.2" opacity=".8"/><circle cx="7.5" cy="13.4" r="1.2" opacity=".8"/></g><path d="M10 3 L15.5 7.5 L10 12 L11.3 7.5 Z" fill="#f57a1a" stroke="#f57a1a" stroke-width="2.4" stroke-linejoin="round"/></svg>
<div class="a" style="left:895.4px;top:812px;width:13.3px;height:14px;background:#545454;border-radius:3px"></div>
<div class="t" style="left:910.38px;top:813.79px;font-size:11.5px;color:#e0e0e0;">Halt Conditions</div>
<svg class="a" style="left:1156px;top:816px;" width="14" height="6" viewBox="0 0 14 6"><rect x="1" y="1" width="1.6" height="1.6" fill="#9a9a9a"/><rect x="1" y="4" width="1.6" height="1.6" fill="#9a9a9a"/><rect x="4" y="1" width="1.6" height="1.6" fill="#9a9a9a"/><rect x="4" y="4" width="1.6" height="1.6" fill="#9a9a9a"/><rect x="7" y="1" width="1.6" height="1.6" fill="#9a9a9a"/><rect x="7" y="4" width="1.6" height="1.6" fill="#9a9a9a"/><rect x="10" y="1" width="1.6" height="1.6" fill="#9a9a9a"/><rect x="10" y="4" width="1.6" height="1.6" fill="#9a9a9a"/></svg>
<div class="a" style="left:850.3px;top:833.1px;width:325.2px;height:24.5px;background:#3d3d3d;border-radius:4px"></div>
<svg class="a" style="left:858.5px;top:839.4px;" width="9" height="12" viewBox="0 0 9 12"><path d="M2.5 2 L6.5 6 L2.5 10" fill="none" stroke="#bdbdbd" stroke-width="1.1"/></svg>
<svg class="a" style="left:871px;top:837.9px;" width="18" height="15" viewBox="0 0 18 15"><g fill="#f07a20"><circle cx="1.8" cy="7.5" r="1" opacity=".55"/><circle cx="4.6" cy="4.7" r="1.1" opacity=".7"/><circle cx="4.6" cy="10.3" r="1.1" opacity=".7"/><circle cx="7.5" cy="1.6" r="1.2" opacity=".8"/><circle cx="7.5" cy="7.5" r="1.2" opacity=".8"/><circle cx="7.5" cy="13.4" r="1.2" opacity=".8"/></g><path d="M10 3 L15.5 7.5 L10 12 L11.3 7.5 Z" fill="#f57a1a" stroke="#f57a1a" stroke-width="2.4" stroke-linejoin="round"/></svg>
<div class="a" style="left:895.4px;top:838.4px;width:13.3px;height:14px;background:#545454;border-radius:3px"></div>
<div class="t" style="left:910.25px;top:840.19px;font-size:11.5px;color:#e0e0e0;transform:scaleX(1.0159);">Image Scaling</div>
<svg class="a" style="left:1156px;top:842.4px;" width="14" height="6" viewBox="0 0 14 6"><rect x="1" y="1" width="1.6" height="1.6" fill="#9a9a9a"/><rect x="1" y="4" width="1.6" height="1.6" fill="#9a9a9a"/><rect x="4" y="1" width="1.6" height="1.6" fill="#9a9a9a"/><rect x="4" y="4" width="1.6" height="1.6" fill="#9a9a9a"/><rect x="7" y="1" width="1.6" height="1.6" fill="#9a9a9a"/><rect x="7" y="4" width="1.6" height="1.6" fill="#9a9a9a"/><rect x="10" y="1" width="1.6" height="1.6" fill="#9a9a9a"/><rect x="10" y="4" width="1.6" height="1.6" fill="#9a9a9a"/></svg>
<div class="a" style="left:850.3px;top:859.5px;width:325.2px;height:24.5px;background:#3d3d3d;border-radius:4px"></div>
<svg class="a" style="left:858.5px;top:865.8px;" width="9" height="12" viewBox="0 0 9 12"><path d="M2.5 2 L6.5 6 L2.5 10" fill="none" stroke="#bdbdbd" stroke-width="1.1"/></svg>
<svg class="a" style="left:871px;top:864.3px;" width="18" height="15" viewBox="0 0 18 15"><g fill="#f07a20"><circle cx="1.8" cy="7.5" r="1" opacity=".55"/><circle cx="4.6" cy="4.7" r="1.1" opacity=".7"/><circle cx="4.6" cy="10.3" r="1.1" opacity=".7"/><circle cx="7.5" cy="1.6" r="1.2" opacity=".8"/><circle cx="7.5" cy="7.5" r="1.2" opacity=".8"/><circle cx="7.5" cy="13.4" r="1.2" opacity=".8"/></g><path d="M10 3 L15.5 7.5 L10 12 L11.3 7.5 Z" fill="#f57a1a" stroke="#f57a1a" stroke-width="2.4" stroke-linejoin="round"/></svg>
<div class="t" style="left:890.63px;top:866.59px;font-size:11.5px;color:#e0e0e0;transform:scaleX(0.9829);">Caches</div>
<svg class="a" style="left:1156px;top:868.8px;" width="14" height="6" viewBox="0 0 14 6"><rect x="1" y="1" width="1.6" height="1.6" fill="#9a9a9a"/><rect x="1" y="4" width="1.6" height="1.6" fill="#9a9a9a"/><rect x="4" y="1" width="1.6" height="1.6" fill="#9a9a9a"/><rect x="4" y="4" width="1.6" height="1.6" fill="#9a9a9a"/><rect x="7" y="1" width="1.6" height="1.6" fill="#9a9a9a"/><rect x="7" y="4" width="1.6" height="1.6" fill="#9a9a9a"/><rect x="10" y="1" width="1.6" height="1.6" fill="#9a9a9a"/><rect x="10" y="4" width="1.6" height="1.6" fill="#9a9a9a"/></svg>
<div class="a" style="left:850.3px;top:885.7px;width:325.2px;height:24.5px;background:#3d3d3d;border-radius:4px"></div>
<svg class="a" style="left:858.5px;top:892px;" width="9" height="12" viewBox="0 0 9 12"><path d="M2.5 2 L6.5 6 L2.5 10" fill="none" stroke="#bdbdbd" stroke-width="1.1"/></svg>
<svg class="a" style="left:871px;top:890.5px;" width="18" height="15" viewBox="0 0 18 15"><g fill="#f07a20"><circle cx="1.8" cy="7.5" r="1" opacity=".55"/><circle cx="4.6" cy="4.7" r="1.1" opacity=".7"/><circle cx="4.6" cy="10.3" r="1.1" opacity=".7"/><circle cx="7.5" cy="1.6" r="1.2" opacity=".8"/><circle cx="7.5" cy="7.5" r="1.2" opacity=".8"/><circle cx="7.5" cy="13.4" r="1.2" opacity=".8"/></g><path d="M10 3 L15.5 7.5 L10 12 L11.3 7.5 Z" fill="#f57a1a" stroke="#f57a1a" stroke-width="2.4" stroke-linejoin="round"/></svg>
<div class="t" style="left:890.26px;top:892.79px;font-size:11.5px;color:#e0e0e0;transform:scaleX(1.0187);">Devices</div>
<svg class="a" style="left:1156px;top:895px;" width="14" height="6" viewBox="0 0 14 6"><rect x="1" y="1" width="1.6" height="1.6" fill="#9a9a9a"/><rect x="1" y="4" width="1.6" height="1.6" fill="#9a9a9a"/><rect x="4" y="1" width="1.6" height="1.6" fill="#9a9a9a"/><rect x="4" y="4" width="1.6" height="1.6" fill="#9a9a9a"/><rect x="7" y="1" width="1.6" height="1.6" fill="#9a9a9a"/><rect x="7" y="4" width="1.6" height="1.6" fill="#9a9a9a"/><rect x="10" y="1" width="1.6" height="1.6" fill="#9a9a9a"/><rect x="10" y="4" width="1.6" height="1.6" fill="#9a9a9a"/></svg>
<div class="a" style="left:850.3px;top:912.4000000000001px;width:325.2px;height:24.5px;background:#3d3d3d;border-radius:4px"></div>
<svg class="a" style="left:858.5px;top:918.7px;" width="9" height="12" viewBox="0 0 9 12"><path d="M2.5 2 L6.5 6 L2.5 10" fill="none" stroke="#bdbdbd" stroke-width="1.1"/></svg>
<div class="t" style="left:870.92px;top:919.49px;font-size:11.5px;color:#e0e0e0;">Color Management</div>
<svg class="a" style="left:1156px;top:921.7px;" width="14" height="6" viewBox="0 0 14 6"><rect x="1" y="1" width="1.6" height="1.6" fill="#9a9a9a"/><rect x="1" y="4" width="1.6" height="1.6" fill="#9a9a9a"/><rect x="4" y="1" width="1.6" height="1.6" fill="#9a9a9a"/><rect x="4" y="4" width="1.6" height="1.6" fill="#9a9a9a"/><rect x="7" y="1" width="1.6" height="1.6" fill="#9a9a9a"/><rect x="7" y="4" width="1.6" height="1.6" fill="#9a9a9a"/><rect x="10" y="1" width="1.6" height="1.6" fill="#9a9a9a"/><rect x="10" y="4" width="1.6" height="1.6" fill="#9a9a9a"/></svg>
<div class="a" style="left:850.3px;top:938.5px;width:325.2px;height:24.5px;background:#3d3d3d;border-radius:4px"></div>
<svg class="a" style="left:858.5px;top:944.8px;" width="9" height="12" viewBox="0 0 9 12"><path d="M2.5 2 L6.5 6 L2.5 10" fill="none" stroke="#bdbdbd" stroke-width="1.1"/></svg>
<svg class="a" style="left:871px;top:943.3px;" width="18" height="15" viewBox="0 0 18 15"><g fill="#f07a20"><circle cx="1.8" cy="7.5" r="1" opacity=".55"/><circle cx="4.6" cy="4.7" r="1.1" opacity=".7"/><circle cx="4.6" cy="10.3" r="1.1" opacity=".7"/><circle cx="7.5" cy="1.6" r="1.2" opacity=".8"/><circle cx="7.5" cy="7.5" r="1.2" opacity=".8"/><circle cx="7.5" cy="13.4" r="1.2" opacity=".8"/></g><path d="M10 3 L15.5 7.5 L10 12 L11.3 7.5 Z" fill="#f57a1a" stroke="#f57a1a" stroke-width="2.4" stroke-linejoin="round"/></svg>
<div class="t" style="left:891.08px;top:945.59px;font-size:11.5px;color:#e0e0e0;transform:scaleX(1.0069);">Viewport Render</div>
<svg class="a" style="left:1156px;top:947.8px;" width="14" height="6" viewBox="0 0 14 6"><rect x="1" y="1" width="1.6" height="1.6" fill="#9a9a9a"/><rect x="1" y="4" width="1.6" height="1.6" fill="#9a9a9a"/><rect x="4" y="1" width="1.6" height="1.6" fill="#9a9a9a"/><rect x="4" y="4" width="1.6" height="1.6" fill="#9a9a9a"/><rect x="7" y="1" width="1.6" height="1.6" fill="#9a9a9a"/><rect x="7" y="4" width="1.6" height="1.6" fill="#9a9a9a"/><rect x="10" y="1" width="1.6" height="1.6" fill="#9a9a9a"/><rect x="10" y="4" width="1.6" height="1.6" fill="#9a9a9a"/></svg>
<div class="a" style="left:850.3px;top:965.0px;width:325.2px;height:24.5px;background:#3d3d3d;border-radius:4px"></div>
<svg class="a" style="left:858.5px;top:971.3px;" width="9" height="12" viewBox="0 0 9 12"><path d="M2.5 2 L6.5 6 L2.5 10" fill="none" stroke="#bdbdbd" stroke-width="1.1"/></svg>
<svg class="a" style="left:871px;top:969.8px;" width="18" height="15" viewBox="0 0 18 15"><g fill="#f07a20"><circle cx="1.8" cy="7.5" r="1" opacity=".55"/><circle cx="4.6" cy="4.7" r="1.1" opacity=".7"/><circle cx="4.6" cy="10.3" r="1.1" opacity=".7"/><circle cx="7.5" cy="1.6" r="1.2" opacity=".8"/><circle cx="7.5" cy="7.5" r="1.2" opacity=".8"/><circle cx="7.5" cy="13.4" r="1.2" opacity=".8"/></g><path d="M10 3 L15.5 7.5 L10 12 L11.3 7.5 Z" fill="#f57a1a" stroke="#f57a1a" stroke-width="2.4" stroke-linejoin="round"/></svg>
<div class="t" style="left:895.71px;top:972.09px;font-size:11.5px;color:#e0e0e0;transform:scaleX(0.9712);">Error Log</div>
<svg class="a" style="left:1156px;top:974.3px;" width="14" height="6" viewBox="0 0 14 6"><rect x="1" y="1" width="1.6" height="1.6" fill="#9a9a9a"/><rect x="1" y="4" width="1.6" height="1.6" fill="#9a9a9a"/><rect x="4" y="1" width="1.6" height="1.6" fill="#9a9a9a"/><rect x="4" y="4" width="1.6" height="1.6" fill="#9a9a9a"/><rect x="7" y="1" width="1.6" height="1.6" fill="#9a9a9a"/><rect x="7" y="4" width="1.6" height="1.6" fill="#9a9a9a"/><rect x="10" y="1" width="1.6" height="1.6" fill="#9a9a9a"/><rect x="10" y="4" width="1.6" height="1.6" fill="#9a9a9a"/></svg>
<div class="a" style="left:850.3px;top:990.7px;width:325.2px;height:24.5px;background:#3d3d3d;border-radius:4px"></div>
<svg class="a" style="left:858.5px;top:997px;" width="9" height="12" viewBox="0 0 9 12"><path d="M2.5 2 L6.5 6 L2.5 10" fill="none" stroke="#bdbdbd" stroke-width="1.1"/></svg>
<svg class="a" style="left:871px;top:995.5px;" width="18" height="15" viewBox="0 0 18 15"><g fill="#f07a20"><circle cx="1.8" cy="7.5" r="1" opacity=".55"/><circle cx="4.6" cy="4.7" r="1.1" opacity=".7"/><circle cx="4.6" cy="10.3" r="1.1" opacity=".7"/><circle cx="7.5" cy="1.6" r="1.2" opacity=".8"/><circle cx="7.5" cy="7.5" r="1.2" opacity=".8"/><circle cx="7.5" cy="13.4" r="1.2" opacity=".8"/></g><path d="M10 3 L15.5 7.5 L10 12 L11.3 7.5 Z" fill="#f57a1a" stroke="#f57a1a" stroke-width="2.4" stroke-linejoin="round"/></svg>
<div class="t" style="left:890.27px;top:997.79px;font-size:11.5px;color:#e0e0e0;transform:scaleX(1.0059);">LuxCore Tools</div>
<svg class="a" style="left:1156px;top:1000px;" width="14" height="6" viewBox="0 0 14 6"><rect x="1" y="1" width="1.6" height="1.6" fill="#9a9a9a"/><rect x="1" y="4" width="1.6" height="1.6" fill="#9a9a9a"/><rect x="4" y="1" width="1.6" height="1.6" fill="#9a9a9a"/><rect x="4" y="4" width="1.6" height="1.6" fill="#9a9a9a"/><rect x="7" y="1" width="1.6" height="1.6" fill="#9a9a9a"/><rect x="7" y="4" width="1.6" height="1.6" fill="#9a9a9a"/><rect x="10" y="1" width="1.6" height="1.6" fill="#9a9a9a"/><rect x="10" y="4" width="1.6" height="1.6" fill="#9a9a9a"/></svg>
<div class="a" style="left:30px;top:1008px;width:1153px;height:21px;background:#181818;border-radius:0 0 8px 8px"></div>
<svg class="a" style="left:42px;top:1012px;" width="12" height="16" viewBox="0 0 12 16"><rect x="1" y="1" width="10" height="14" rx="4.5" fill="none" stroke="#9a9a9a" stroke-width="1"/><path d="M6 1 L6 7" stroke="#9a9a9a" stroke-width="1"/><path d="M1.5 7 L1.5 5 A4 4 0 0 1 5.5 1.5 L5.5 7 Z" fill="#9a9a9a"/></svg>
<div class="t" style="left:64.14px;top:1014.79px;font-size:11.5px;color:#a8a8a8;transform:scaleX(0.9687);">Select</div>
<svg class="a" style="left:266px;top:1012px;" width="12" height="16" viewBox="0 0 12 16"><rect x="1" y="1" width="10" height="14" rx="4.5" fill="none" stroke="#9a9a9a" stroke-width="1"/><path d="M6 1 L6 7" stroke="#9a9a9a" stroke-width="1"/><rect x="4.5" y="3" width="3" height="4" rx="1" fill="#9a9a9a"/></svg>
<div class="t" style="left:288.05px;top:1014.79px;font-size:11.5px;color:#a8a8a8;transform:scaleX(1.0274);">Rotate View</div>
<svg class="a" style="left:491px;top:1012px;" width="12" height="16" viewBox="0 0 12 16"><rect x="1" y="1" width="10" height="14" rx="4.5" fill="none" stroke="#9a9a9a" stroke-width="1"/><path d="M6 1 L6 7" stroke="#9a9a9a" stroke-width="1"/><path d="M10.5 7 L10.5 5 A4 4 0 0 0 6.5 1.5 L6.5 7 Z" fill="#9a9a9a"/></svg>
<div class="t" style="left:513.42px;top:1014.79px;font-size:11.5px;color:#a8a8a8;transform:scaleX(1.0120);">Object Context Menu</div>
<div class="t" style="left:1144.82px;top:1014.79px;font-size:11.5px;color:#8f8f8f;">3.6.5</div>
<div class="a" style="left:30px;top:37px;width:1153px;height:992px;background:transparent;border:1px solid rgba(0,0,0,.28);border-radius:8px"></div>
</body></html>
